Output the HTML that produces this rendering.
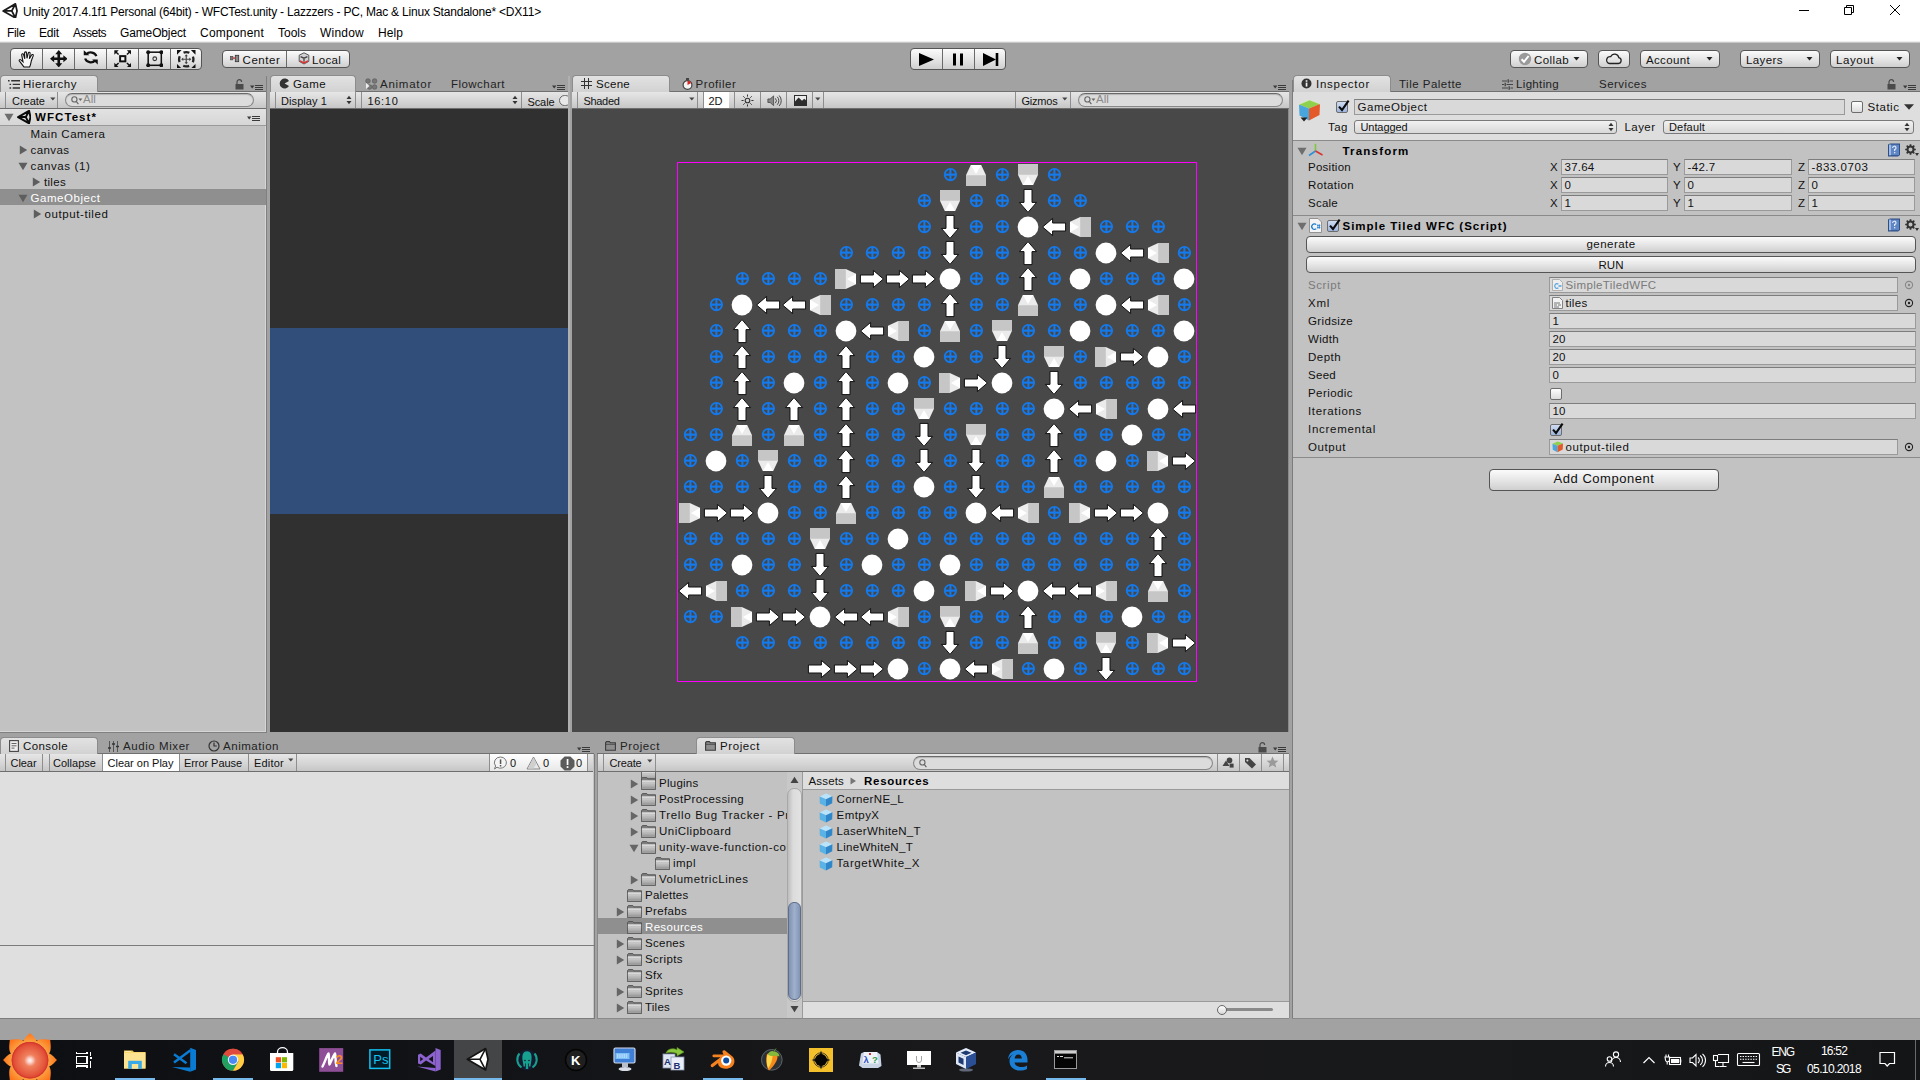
<!DOCTYPE html>
<html><head><meta charset="utf-8"><title>Unity</title>
<style>
html,body{margin:0;padding:0}
body{width:1920px;height:1080px;overflow:hidden;background:#a2a2a2;font-family:"Liberation Sans",sans-serif;position:relative}
div,span.t,svg{position:absolute}
.t{white-space:nowrap}
.tb{background:linear-gradient(#e6e6e6,#d4d4d4 60%,#c6c6c6);border-bottom:1px solid #6e6e6e;box-sizing:border-box}
.tab{background:linear-gradient(#e2e2e2,#d2d2d2);border:1px solid #8c8c8c;border-bottom:none;border-radius:4px 4px 0 0;box-sizing:border-box}
.btn{background:linear-gradient(#fbfbfb,#e4e4e4 55%,#cfcfcf);border:1px solid #555;border-radius:4px;box-sizing:border-box}
.inp{background:#d9d9d9;border:1px solid #9a9a9a;border-top-color:#7d7d7d;box-sizing:border-box}
.pop{background:linear-gradient(#f2f2f2,#d8d8d8);border:1px solid #7a7a7a;border-radius:3px;box-sizing:border-box}
.sep{background:#8e8e8e;width:1px}
</style></head><body>
<div style="left:0px;top:0px;width:1920px;height:43.5px;background:linear-gradient(#fff 41px,#c8c8c8 42.5px,#a2a2a2 43.5px)"></div><svg style="left:2.2px;top:2.7px" width="15.8" height="15.8" viewBox="0 0 16 16"><path d="M1.2 8 L13.6 0.9 L15.2 8 L13.6 15.1Z M9.9 8 H1.6 M9.9 8 L13.5 1.2 M9.9 8 L13.5 14.8" fill="none" stroke="#1a1a1a" stroke-width="1.8" stroke-linejoin="round"/></svg><span class="t" style="left:23px;top:3px;font-size:12px;line-height:18px;color:#000;letter-spacing:-0.207px;">Unity 2017.4.1f1 Personal (64bit) - WFCTest.unity - Lazzzers - PC, Mac &amp; Linux Standalone* &lt;DX11&gt;</span><svg style="left:1790px;top:0" width="130" height="22" viewBox="0 0 130 22"><g stroke="#000" stroke-width="1" fill="none"><path d="M9 10.5 H19"/><path d="M54.5 7.5 H61.5 V14.5 H54.5Z M56.5 7.5 V5.5 H63.5 V12.5 H61.5"/><path d="M100 5 L110 15 M110 5 L100 15"/></g></svg><span class="t" style="left:7px;top:25px;font-size:12px;line-height:16px;color:#000;letter-spacing:-0.336px;">File</span><span class="t" style="left:39px;top:25px;font-size:12px;line-height:16px;color:#000;letter-spacing:-0.172px;">Edit</span><span class="t" style="left:73px;top:25px;font-size:12px;line-height:16px;color:#000;letter-spacing:-0.503px;">Assets</span><span class="t" style="left:120px;top:25px;font-size:12px;line-height:16px;color:#000;letter-spacing:-0.136px;">GameObject</span><span class="t" style="left:200px;top:25px;font-size:12px;line-height:16px;color:#000;letter-spacing:0.217px;">Component</span><span class="t" style="left:278px;top:25px;font-size:12px;line-height:16px;color:#000;letter-spacing:-0.003px;">Tools</span><span class="t" style="left:320px;top:25px;font-size:12px;line-height:16px;color:#000;letter-spacing:0.219px;">Window</span><span class="t" style="left:378px;top:25px;font-size:12px;line-height:16px;color:#000;letter-spacing:0.078px;">Help</span><div class="btn" style="left:10px;top:48px;width:192px;height:22px;"></div><div style="left:42px;top:49px;width:1px;height:20px;background:#6a6a6a"></div><div style="left:74px;top:49px;width:1px;height:20px;background:#6a6a6a"></div><div style="left:106px;top:49px;width:1px;height:20px;background:#6a6a6a"></div><div style="left:138px;top:49px;width:1px;height:20px;background:#6a6a6a"></div><div style="left:170px;top:49px;width:1px;height:20px;background:#6a6a6a"></div><svg style="left:17.65px;top:50.05px" width="17.5" height="17.5" viewBox="0 0 16 16"><path d="M5.6 15.6 C4.2 14 3 12 1.3 10.2 C0.6 9.3 1.6 8.2 2.6 9 L4.6 10.8 L3.4 4.6 C3.2 3.4 4.8 3 5.1 4.2 L6.2 8 L6 2.6 C6 1.4 7.7 1.4 7.8 2.6 L8.2 7.6 L9.4 2.8 C9.700 1.600 11.300 2 11.100 3.200 L10.400 8 L12.400 4.600 C13 3.600 14.400 4.300 13.900 5.400 L12.200 9.800 C11.800 12 11.600 13.800 10.600 15.600Z" fill="#f8f8f8" stroke="#111" stroke-width="1"/></svg><svg style="left:49.65px;top:49.75px" width="17.5" height="17.5" viewBox="0 0 16 16"><path d="M8 0 L11.2 3.8 H9.2 V6.8 H12.2 V4.8 L16 8 L12.2 11.2 V9.2 H9.2 V12.2 H11.2 L8 16 L4.8 12.200 H6.800 V9.200 H3.800 V11.200 L0 8 L3.800 4.800 V6.800 H6.800 V3.800 H4.800Z" fill="#111"/></svg><svg style="left:82.65px;top:49.75px" width="15.5" height="15.5" viewBox="0 0 16 16"><g transform="translate(16 0) scale(-1 1)"><path d="M2.2 6.4 A6 5.2 0 0 1 12.6 4.4" fill="none" stroke="#111" stroke-width="2.3"/><path d="M9.4 5.400 H15.200 V0.200Z" fill="#111"/><path d="M13.800 8.800 A6 5.200 0 0 1 3.400 10.800" fill="none" stroke="#111" stroke-width="2.300"/><path d="M6.600 9.800 H0.800 V15Z" fill="#111"/></g></svg><svg style="left:113.65px;top:49.75px" width="17.5" height="17.5" viewBox="0 0 16 16"><rect x="5.6" y="5.600" width="4.800" height="4.800" fill="#f4f4f4" stroke="#111" stroke-width="1.800"/><path d="M0.300 0.300 H4.300 L0.300 4.300Z M15.700 0.300 V4.300 L11.700 0.300Z M0.300 15.700 V11.700 L4.300 15.700Z M15.700 15.700 H11.700 L15.700 11.700Z" fill="#111"/><path d="M1.500 1.500 L4.200 4.200 M14.500 1.500 L11.800 4.200 M1.500 14.500 L4.200 11.800 M14.500 14.500 L11.800 11.800" stroke="#111" stroke-width="1.300"/></svg><svg style="left:145.65px;top:49.75px" width="17.5" height="17.5" viewBox="0 0 16 16"><rect x="2" y="2" width="12" height="12" fill="none" stroke="#111" stroke-width="1.400"/><circle cx="2" cy="2" r="1.800" fill="#111"/><circle cx="14" cy="2" r="1.800" fill="#111"/><circle cx="2" cy="14" r="1.800" fill="#111"/><circle cx="14" cy="14" r="1.800" fill="#111"/><circle cx="8" cy="8" r="1.700" fill="none" stroke="#333" stroke-width="1"/></svg><svg style="left:177.15px;top:49.55px" width="18.5" height="18.5" viewBox="0 0 16 16"><circle cx="8" cy="8" r="6.200" fill="none" stroke="#222" stroke-width="2" stroke-dasharray="5.200 4.540" stroke-dashoffset="2.600"/><path d="M8 3.600 L9.500 5.400 H8.500 V7.500 H10.600 V6.500 L12.400 8 L10.600 9.500 V8.500 H8.500 V10.600 H9.500 L8 12.400 L6.500 10.600 H7.500 V8.500 H5.400 V9.500 L3.600 8 L5.400 6.500 V7.500 H7.500 V5.400 H6.500Z" fill="#444"/><path d="M0 0 H4 L0 4Z M16 0 V4 L12 0Z M0 16 V12 L4 16Z M16 16 H12 L16 12Z" fill="#111"/></svg><div class="btn" style="left:222px;top:50px;width:128px;height:18px;"></div><div style="left:286px;top:51px;width:1px;height:16px;background:#6a6a6a"></div><svg style="left:229.5px;top:54px" width="11" height="10" viewBox="0 0 11 10"><rect x="0.300" y="2.300" width="2.600" height="3.600" fill="#777" stroke="#444" stroke-width="0.600"/><rect x="5.300" y="1.300" width="3.400" height="6.400" fill="#8a8a8a" stroke="#333" stroke-width="0.800"/><rect x="3" y="3.400" width="2.300" height="1.400" fill="#d33"/></svg><span class="t" style="left:242.5px;top:52.6px;font-size:11.5px;line-height:14px;color:#111;letter-spacing:0.578px;">Center</span><svg style="left:298px;top:52px" width="12" height="13" viewBox="0 0 12 13"><path d="M6 0.800 L10.800 3.200 V9.400 L6 12 L1.200 9.400 V3.200Z" fill="#d2d2d2" stroke="#4a4a4a" stroke-width="0.900"/><path d="M2.600 4.600 L6 6.200 L9.400 4.600 M6 6.200 V9.800" stroke="#444" stroke-width="1.300" fill="none"/><path d="M2 8.800 L6 10.900 L10 8.800" stroke="#e03030" stroke-width="1.300" fill="none"/></svg><span class="t" style="left:312px;top:52.6px;font-size:11.5px;line-height:14px;color:#111;letter-spacing:0.3px;">Local</span><div class="btn" style="left:910px;top:48px;width:96px;height:22px;"></div><div style="left:942px;top:49px;width:1px;height:20px;background:#6a6a6a"></div><div style="left:974px;top:49px;width:1px;height:20px;background:#6a6a6a"></div><svg style="left:910px;top:48px" width="96" height="22" viewBox="0 0 96 22"><path d="M9 5 L24 11.5 L9 18Z" fill="#000"/><path d="M44.5 5.5 V17.5 M51.5 5.5 V17.5" stroke="#000" stroke-width="3"/><path d="M73 5 L86 11.5 L73 18Z" fill="#000"/><path d="M87 5 V18" stroke="#000" stroke-width="2.6"/></svg><div class="btn" style="left:1510px;top:50px;width:78px;height:18px;"></div><svg style="left:1518px;top:52px" width="14" height="14" viewBox="0 0 14 14"><circle cx="7" cy="7" r="6.2" fill="#9a9a9a"/><path d="M3.6 7.2 L6 9.8 L10.6 4" stroke="#fff" stroke-width="2" fill="none"/></svg><span class="t" style="left:1534px;top:52.6px;font-size:11.5px;line-height:14px;color:#111;letter-spacing:0.398px;">Collab</span><svg style="left:1573px;top:56px" width="8" height="6"><path d="M0.5 1 H6.5 L3.5 4.5Z" fill="#222"/></svg><div class="btn" style="left:1598px;top:50px;width:32px;height:18px;"></div><svg style="left:1605px;top:52px" width="18" height="14" viewBox="0 0 18 14"><path d="M4.5 11.5 H13.5 A3 3 0 0 0 13.8 5.6 A4.2 4.2 0 0 0 5.8 4.6 A3.4 3.4 0 0 0 4.5 11.5Z" fill="none" stroke="#222" stroke-width="1.3"/></svg><div class="btn" style="left:1640px;top:50px;width:80px;height:18px;"></div><span class="t" style="left:1646px;top:52.6px;font-size:11.5px;line-height:14px;color:#111;letter-spacing:0.348px;">Account</span><svg style="left:1706px;top:56px" width="8" height="6"><path d="M0.5 1 H6.5 L3.5 4.5Z" fill="#222"/></svg><div class="btn" style="left:1740px;top:50px;width:80px;height:18px;"></div><span class="t" style="left:1746px;top:52.6px;font-size:11.5px;line-height:14px;color:#111;letter-spacing:0.411px;">Layers</span><svg style="left:1806px;top:56px" width="8" height="6"><path d="M0.5 1 H6.5 L3.5 4.5Z" fill="#222"/></svg><div class="btn" style="left:1830px;top:50px;width:80px;height:18px;"></div><span class="t" style="left:1836px;top:52.6px;font-size:11.5px;line-height:14px;color:#111;letter-spacing:0.578px;">Layout</span><svg style="left:1896px;top:56px" width="8" height="6"><path d="M0.5 1 H6.5 L3.5 4.5Z" fill="#222"/></svg><div style="left:0px;top:91px;width:266px;height:641px;background:#c2c2c2"></div><div style="left:0px;top:91px;width:266px;height:1px;background:#707070"></div><div style="left:265px;top:92px;width:1px;height:640px;background:#d6d6d6"></div><div style="left:0px;top:731px;width:266px;height:1px;background:#d6d6d6"></div><div style="left:266px;top:76px;width:1px;height:657px;background:#808080"></div><div style="left:0px;top:732px;width:267px;height:1px;background:#808080"></div><div class="tab" style="left:0px;top:75px;width:98px;height:17px;"></div><svg style="left:8px;top:80px" width="12" height="9" viewBox="0 0 12 9"><path d="M0 0.8 H1.6 M3.2 0.8 H12 M1.5 4.4 H3.1 M4.7 4.4 H12 M1.5 8 H3.1 M4.7 8 H12" stroke="#333" stroke-width="1.4"/></svg><span class="t" style="left:23px;top:77px;font-size:11.5px;line-height:15px;color:#111;letter-spacing:0.531px;">Hierarchy</span><svg style="left:235px;top:79px" width="9" height="11" viewBox="0 0 9 11"><path d="M2 5 V3 A2.3 2.3 0 0 1 6.6 3" fill="none" stroke="#4a4a4a" stroke-width="1.2"/><rect x="0.5" y="5" width="8" height="5.5" fill="#4a4a4a"/></svg><svg style="left:250px;top:84px" width="13" height="8" viewBox="0 0 13 8"><path d="M0 1.500 H4.400 L2.200 4.500Z" fill="#3a3a3a"/><path d="M5 1.500 H13 M5 3.500 H13 M5 5.500 H13" stroke="#3a3a3a" stroke-width="1"/></svg><div class="tb" style="left:0px;top:92px;width:266px;height:17px;"></div><div class="sep" style="left:5px;top:92px;width:1px;height:16px;"></div><div class="sep" style="left:57px;top:92px;width:1px;height:16px;"></div><span class="t" style="left:12px;top:93.8px;font-size:11px;line-height:15px;color:#111;letter-spacing:-0.005px;">Create</span><svg style="left:50px;top:97px" width="6" height="4"><path d="M0.2 0.4 H5.4 L2.8 3.4Z" fill="#444"/></svg><div style="left:65px;top:93px;width:189px;height:14px;background:#dcdcdc;border:1px solid #888;border-top-color:#6a6a6a;border-radius:8px;box-sizing:border-box;box-shadow:inset 0 1px 1px rgba(0,0,0,.18)"></div><svg style="left:71px;top:96px" width="12" height="9" viewBox="0 0 12 9"><circle cx="3.4" cy="3.4" r="2.6" fill="none" stroke="#666" stroke-width="1.1"/><path d="M5.2 5.4 L7.4 8.2" stroke="#666" stroke-width="1.2"/><path d="M7.4 2.6 H11.4 L9.4 5Z" fill="#666"/></svg><span class="t" style="left:83px;top:92px;font-size:11.5px;line-height:15px;color:#8a8a8a;">All</span><div style="left:0px;top:109px;width:266px;height:17px;background:linear-gradient(#e2e2e2,#d6d6d6);border-bottom:1px solid #9a9a9a;box-sizing:border-box"></div><svg style="left:4px;top:113px" width="10" height="9"><path d="M0.5 0.8 H9.5 L5 8.2Z" fill="#6e6e6e"/></svg><svg style="left:17px;top:110px" width="14.2" height="14.2" viewBox="0 0 16 16"><path d="M1.2 8 L13.6 0.9 L15.2 8 L13.6 15.1Z M9.9 8 H1.6 M9.9 8 L13.5 1.2 M9.9 8 L13.5 14.8" fill="none" stroke="#0a0a0a" stroke-width="2.2" stroke-linejoin="round"/></svg><span class="t" style="left:35px;top:110px;font-size:11.5px;line-height:15px;color:#000;font-weight:bold;letter-spacing:1.068px;">WFCTest*</span><svg style="left:247px;top:115px" width="13" height="8" viewBox="0 0 13 8"><path d="M0 1.500 H4.400 L2.200 4.500Z" fill="#3a3a3a"/><path d="M5 1.500 H13 M5 3.500 H13 M5 5.500 H13" stroke="#3a3a3a" stroke-width="1"/></svg><span class="t" style="left:30.5px;top:126.7px;font-size:11.5px;line-height:15px;color:#111;letter-spacing:0.543px;">Main Camera</span><svg style="left:18.5px;top:145px" width="9" height="10"><path d="M0.8 0.5 V9.5 L8.2 5Z" fill="#5e5e5e"/></svg><span class="t" style="left:30.5px;top:142.7px;font-size:11.5px;line-height:15px;color:#111;letter-spacing:0.427px;">canvas</span><svg style="left:17.5px;top:161.5px" width="10" height="9"><path d="M0.5 0.8 H9.5 L5 8.2Z" fill="#5e5e5e"/></svg><span class="t" style="left:30.5px;top:158.7px;font-size:11.5px;line-height:15px;color:#111;letter-spacing:0.631px;">canvas (1)</span><svg style="left:32px;top:177px" width="9" height="10"><path d="M0.8 0.5 V9.5 L8.2 5Z" fill="#5e5e5e"/></svg><span class="t" style="left:44px;top:174.7px;font-size:11.5px;line-height:15px;color:#111;letter-spacing:0.309px;">tiles</span><div style="left:0px;top:188.5px;width:266px;height:16px;background:#8f8f8f"></div><svg style="left:17.5px;top:193.5px" width="10" height="9"><path d="M0.5 0.8 H9.5 L5 8.2Z" fill="#5e5e5e"/></svg><span class="t" style="left:30.5px;top:190.7px;font-size:11.5px;line-height:15px;color:#fff;letter-spacing:0.544px;">GameObject</span><svg style="left:32.5px;top:209px" width="9" height="10"><path d="M0.8 0.5 V9.5 L8.2 5Z" fill="#5e5e5e"/></svg><span class="t" style="left:44.5px;top:206.7px;font-size:11.5px;line-height:15px;color:#111;letter-spacing:0.591px;">output-tiled</span><div style="left:270px;top:91px;width:298px;height:641px;background:#303030"></div><div style="left:270px;top:91px;width:298px;height:1px;background:#707070"></div><div style="left:270px;top:328px;width:298px;height:186px;background:#314d79"></div><div style="left:568px;top:76px;width:2px;height:656px;background:#b0b0b0"></div><div class="tab" style="left:270px;top:75px;width:86px;height:17px;"></div><svg style="left:279px;top:78px" width="11" height="11" viewBox="0 0 11 11"><path d="M10 3 A5 5 0 1 0 10 8 L5.6 5.5Z" fill="#333"/></svg><span class="t" style="left:293px;top:77px;font-size:11.5px;line-height:15px;color:#111;letter-spacing:0.418px;">Game</span><svg style="left:365px;top:78px" width="13" height="12" viewBox="0 0 13 12"><g fill="#777" stroke="#555" stroke-width="0.6"><circle cx="3" cy="3" r="2.3"/><circle cx="9.6" cy="3" r="2.3"/><circle cx="9.6" cy="9" r="2.3"/><circle cx="4.6" cy="9" r="2.3"/></g><path d="M1 5 V11 L4.5 8Z" fill="#eee"/></svg><span class="t" style="left:380px;top:77px;font-size:11.5px;line-height:15px;color:#222;letter-spacing:0.746px;">Animator</span><span class="t" style="left:451px;top:77px;font-size:11.5px;line-height:15px;color:#222;letter-spacing:0.46px;">Flowchart</span><svg style="left:552px;top:84px" width="13" height="8" viewBox="0 0 13 8"><path d="M0 1.500 H4.400 L2.200 4.500Z" fill="#3a3a3a"/><path d="M5 1.500 H13 M5 3.500 H13 M5 5.500 H13" stroke="#3a3a3a" stroke-width="1"/></svg><div class="tb" style="left:270px;top:92px;width:298px;height:17px;"></div><div class="sep" style="left:275px;top:92px;width:1px;height:16px;"></div><div class="sep" style="left:355px;top:92px;width:1px;height:16px;"></div><div class="sep" style="left:361px;top:92px;width:1px;height:16px;"></div><div class="sep" style="left:521px;top:92px;width:1px;height:16px;"></div><span class="t" style="left:281px;top:93.8px;font-size:11px;line-height:15px;color:#111;letter-spacing:0.083px;">Display 1</span><svg style="left:346px;top:95px" width="6" height="10"><path d="M0.5 4 H5.5 L3 0.8Z M0.5 6 H5.5 L3 9.2Z" fill="#333"/></svg><span class="t" style="left:367.5px;top:93.8px;font-size:11px;line-height:15px;color:#111;letter-spacing:0.694px;">16:10</span><svg style="left:512px;top:95px" width="6" height="10"><path d="M0.5 4 H5.5 L3 0.8Z M0.5 6 H5.5 L3 9.2Z" fill="#333"/></svg><span class="t" style="left:527.5px;top:94.5px;font-size:11px;line-height:15px;color:#111;letter-spacing:-0.106px;">Scale</span><div style="left:559px;top:95px;width:12px;height:11px;border:1px solid #666;border-radius:6px;background:#e8e8e8;box-sizing:border-box;clip-path:inset(0 3px 0 0)"></div><div style="left:572px;top:91px;width:716px;height:641px;background:#484848"></div><div style="left:1288px;top:92px;width:1px;height:640px;background:#8a8a8a"></div><div style="left:572px;top:91px;width:717px;height:1px;background:#707070"></div><div class="tab" style="left:572px;top:75px;width:98px;height:17px;"></div><svg style="left:581px;top:78px" width="11" height="11" viewBox="0 0 11 11"><path d="M3.5 0 V11 M7.5 0 V11 M0 3.5 H11 M0 7.5 H11" stroke="#333" stroke-width="1"/></svg><span class="t" style="left:596px;top:77px;font-size:11.5px;line-height:15px;color:#111;letter-spacing:0.278px;">Scene</span><svg style="left:682px;top:78px" width="11" height="12" viewBox="0 0 11 12"><rect x="4" y="0" width="3" height="2" fill="#444"/><circle cx="5.5" cy="7" r="4.4" fill="#f4f4f4" stroke="#444" stroke-width="1.2"/><path d="M5.5 7 V2.8 A4.2 4.2 0 0 1 9.2 5Z" fill="#d22"/></svg><span class="t" style="left:695.5px;top:77px;font-size:11.5px;line-height:15px;color:#222;letter-spacing:0.57px;">Profiler</span><svg style="left:1273px;top:84px" width="13" height="8" viewBox="0 0 13 8"><path d="M0 1.500 H4.400 L2.200 4.500Z" fill="#3a3a3a"/><path d="M5 1.500 H13 M5 3.500 H13 M5 5.500 H13" stroke="#3a3a3a" stroke-width="1"/></svg><div class="tb" style="left:572px;top:92px;width:717px;height:17px;"></div><div class="sep" style="left:577px;top:92px;width:1px;height:16px;"></div><div class="sep" style="left:697px;top:92px;width:1px;height:16px;"></div><div class="sep" style="left:703px;top:92px;width:1px;height:16px;"></div><div class="sep" style="left:734px;top:92px;width:1px;height:16px;"></div><div class="sep" style="left:760px;top:92px;width:1px;height:16px;"></div><div class="sep" style="left:786px;top:92px;width:1px;height:16px;"></div><div class="sep" style="left:812px;top:92px;width:1px;height:16px;"></div><div class="sep" style="left:823px;top:92px;width:1px;height:16px;"></div><div class="sep" style="left:1015px;top:92px;width:1px;height:16px;"></div><div class="sep" style="left:1070px;top:92px;width:1px;height:16px;"></div><span class="t" style="left:583.5px;top:93.8px;font-size:11px;line-height:15px;color:#111;letter-spacing:-0.323px;">Shaded</span><svg style="left:689px;top:97px" width="6" height="4"><path d="M0.2 0.4 H5.4 L2.8 3.4Z" fill="#444"/></svg><div style="left:704px;top:92px;width:25px;height:16px;background:#fff"></div><span class="t" style="left:708.5px;top:93.8px;font-size:11px;line-height:15px;color:#111;letter-spacing:-0.031px;">2D</span><svg style="left:740px;top:93px" width="15" height="15" viewBox="0 0 15 15"><circle cx="7.5" cy="7.5" r="2.3" fill="none" stroke="#333" stroke-width="1.1"/><path d="M7.5 1.5 V3.6 M7.5 11.4 V13.5 M1.5 7.5 H3.6 M11.4 7.5 H13.5 M3.3 3.3 L4.7 4.7 M10.3 10.3 L11.7 11.7 M3.3 11.7 L4.7 10.3 M10.3 4.7 L11.7 3.3" stroke="#333" stroke-width="1"/></svg><svg style="left:766.5px;top:94px" width="15" height="13.500" viewBox="0 0 17 15"><path d="M1 5.5 H3.5 L7.5 2 V13 L3.5 9.5 H1Z" fill="#888" stroke="#444" stroke-width="0.9"/><path d="M9.5 4.8 A4 4 0 0 1 9.5 10.2 M11.6 3 A6.5 6.5 0 0 1 11.6 12 M13.8 1.6 A8.6 8.6 0 0 1 13.8 13.4" fill="none" stroke="#444" stroke-width="1.1"/></svg><svg style="left:794px;top:95px" width="13" height="11" viewBox="0 0 13 11"><rect x="0" y="0" width="13" height="11" fill="#2e2e2e"/><path d="M1 1 H12 V5.200 L10.200 3.800 L8 5.800 L4.600 2.600 L1 6.600Z" fill="#ececec"/></svg><svg style="left:815px;top:97px" width="6" height="4"><path d="M0.2 0.4 H5.4 L2.8 3.4Z" fill="#444"/></svg><span class="t" style="left:1021.5px;top:93.8px;font-size:11px;line-height:15px;color:#111;letter-spacing:-0.214px;">Gizmos</span><svg style="left:1062px;top:97px" width="6" height="4"><path d="M0.2 0.4 H5.4 L2.8 3.4Z" fill="#444"/></svg><div style="left:1078px;top:93px;width:205px;height:14px;background:#dcdcdc;border:1px solid #888;border-top-color:#6a6a6a;border-radius:8px;box-sizing:border-box;box-shadow:inset 0 1px 1px rgba(0,0,0,.18)"></div><svg style="left:1084px;top:96px" width="12" height="9" viewBox="0 0 12 9"><circle cx="3.4" cy="3.4" r="2.6" fill="none" stroke="#666" stroke-width="1.1"/><path d="M5.2 5.4 L7.4 8.2" stroke="#666" stroke-width="1.2"/><path d="M7.4 2.6 H11.4 L9.4 5Z" fill="#666"/></svg><span class="t" style="left:1096px;top:92px;font-size:11.5px;line-height:15px;color:#8a8a8a;">All</span><svg style="left:572px;top:109px" width="716" height="623" viewBox="572 109 716 623"><style>.ec{fill:#494540;stroke:#1479ea;stroke-width:1.9}.ep{stroke:#1479ea;stroke-width:2.1;fill:none}.ar{fill:#fff;stroke:#101010;stroke-width:1}.l1{fill:#c6c6c6}.l2{fill:#ebebeb}.l3{fill:#fff}</style><rect x="677.5" y="162.5" width="519" height="519" fill="none" stroke="#f0f" stroke-width="1"/><circle cx="950.4" cy="174.6" r="5.7" class="ec"/><path d="M944.7 174.6H956.1M950.4 168.9V180.3" class="ep"/><g transform="translate(976 175) rotate(270)"><rect x="-11" y="-10" width="11" height="20" class="l1"/><path d="M-.2 -10 10 -5.2V5.2L-.2 10Z" class="l2"/><path d="M10 -5.2V5.2L1 0Z" class="l3"/></g><circle cx="1002.4" cy="174.6" r="5.7" class="ec"/><path d="M996.7 174.6H1008.1M1002.4 168.9V180.3" class="ep"/><g transform="translate(1028 175) rotate(90)"><rect x="-11" y="-10" width="11" height="20" class="l1"/><path d="M-.2 -10 10 -5.2V5.2L-.2 10Z" class="l2"/><path d="M10 -5.2V5.2L1 0Z" class="l3"/></g><circle cx="1054.4" cy="174.6" r="5.7" class="ec"/><path d="M1048.7 174.6H1060.1M1054.4 168.9V180.3" class="ep"/><circle cx="924.4" cy="200.6" r="5.7" class="ec"/><path d="M918.7 200.6H930.1M924.4 194.9V206.3" class="ep"/><g transform="translate(950 201) rotate(90)"><rect x="-11" y="-10" width="11" height="20" class="l1"/><path d="M-.2 -10 10 -5.2V5.2L-.2 10Z" class="l2"/><path d="M10 -5.2V5.2L1 0Z" class="l3"/></g><circle cx="976.4" cy="200.6" r="5.7" class="ec"/><path d="M970.7 200.6H982.1M976.4 194.9V206.3" class="ep"/><circle cx="1002.4" cy="200.6" r="5.7" class="ec"/><path d="M996.7 200.6H1008.1M1002.4 194.9V206.3" class="ep"/><path transform="translate(1028 201) rotate(90)" class="ar" d="M-11.6 -4H1.4V-8.6L11.4 0 1.4 8.6V4H-11.6Z"/><circle cx="1054.4" cy="200.6" r="5.7" class="ec"/><path d="M1048.7 200.6H1060.1M1054.4 194.9V206.3" class="ep"/><circle cx="1080.4" cy="200.6" r="5.7" class="ec"/><path d="M1074.7 200.6H1086.1M1080.4 194.9V206.3" class="ep"/><circle cx="924.4" cy="226.6" r="5.7" class="ec"/><path d="M918.7 226.6H930.1M924.4 220.9V232.3" class="ep"/><path transform="translate(950 227) rotate(90)" class="ar" d="M-11.6 -4H1.4V-8.6L11.4 0 1.4 8.6V4H-11.6Z"/><circle cx="976.4" cy="226.6" r="5.7" class="ec"/><path d="M970.7 226.6H982.1M976.4 220.9V232.3" class="ep"/><circle cx="1002.4" cy="226.6" r="5.7" class="ec"/><path d="M996.7 226.6H1008.1M1002.4 220.9V232.3" class="ep"/><circle cx="1028" cy="227" r="10.4" fill="#fff"/><path transform="translate(1054 227) rotate(180)" class="ar" d="M-11.6 -4H1.4V-8.6L11.4 0 1.4 8.6V4H-11.6Z"/><g transform="translate(1080 227) rotate(180)"><rect x="-11" y="-10" width="11" height="20" class="l1"/><path d="M-.2 -10 10 -5.2V5.2L-.2 10Z" class="l2"/><path d="M10 -5.2V5.2L1 0Z" class="l3"/></g><circle cx="1106.4" cy="226.6" r="5.7" class="ec"/><path d="M1100.7 226.6H1112.1M1106.4 220.9V232.3" class="ep"/><circle cx="1132.4" cy="226.6" r="5.7" class="ec"/><path d="M1126.7 226.6H1138.1M1132.4 220.9V232.3" class="ep"/><circle cx="1158.4" cy="226.6" r="5.7" class="ec"/><path d="M1152.7 226.6H1164.1M1158.4 220.9V232.3" class="ep"/><circle cx="846.4" cy="252.6" r="5.7" class="ec"/><path d="M840.7 252.6H852.1M846.4 246.9V258.3" class="ep"/><circle cx="872.4" cy="252.6" r="5.7" class="ec"/><path d="M866.7 252.6H878.1M872.4 246.9V258.3" class="ep"/><circle cx="898.4" cy="252.6" r="5.7" class="ec"/><path d="M892.7 252.6H904.1M898.4 246.9V258.3" class="ep"/><circle cx="924.4" cy="252.6" r="5.7" class="ec"/><path d="M918.7 252.6H930.1M924.4 246.9V258.3" class="ep"/><path transform="translate(950 253) rotate(90)" class="ar" d="M-11.6 -4H1.4V-8.6L11.4 0 1.4 8.6V4H-11.6Z"/><circle cx="976.4" cy="252.6" r="5.7" class="ec"/><path d="M970.7 252.6H982.1M976.4 246.9V258.3" class="ep"/><circle cx="1002.4" cy="252.6" r="5.7" class="ec"/><path d="M996.7 252.6H1008.1M1002.4 246.9V258.3" class="ep"/><path transform="translate(1028 253) rotate(270)" class="ar" d="M-11.6 -4H1.4V-8.6L11.4 0 1.4 8.6V4H-11.6Z"/><circle cx="1054.4" cy="252.6" r="5.7" class="ec"/><path d="M1048.7 252.6H1060.1M1054.4 246.9V258.3" class="ep"/><circle cx="1080.4" cy="252.6" r="5.7" class="ec"/><path d="M1074.7 252.6H1086.1M1080.4 246.9V258.3" class="ep"/><circle cx="1106" cy="253" r="10.4" fill="#fff"/><path transform="translate(1132 253) rotate(180)" class="ar" d="M-11.6 -4H1.4V-8.6L11.4 0 1.4 8.6V4H-11.6Z"/><g transform="translate(1158 253) rotate(180)"><rect x="-11" y="-10" width="11" height="20" class="l1"/><path d="M-.2 -10 10 -5.2V5.2L-.2 10Z" class="l2"/><path d="M10 -5.2V5.2L1 0Z" class="l3"/></g><circle cx="1184.4" cy="252.6" r="5.7" class="ec"/><path d="M1178.7 252.6H1190.1M1184.4 246.9V258.3" class="ep"/><circle cx="742.4" cy="278.6" r="5.7" class="ec"/><path d="M736.7 278.6H748.1M742.4 272.9V284.3" class="ep"/><circle cx="768.4" cy="278.6" r="5.7" class="ec"/><path d="M762.7 278.6H774.1M768.4 272.9V284.3" class="ep"/><circle cx="794.4" cy="278.6" r="5.7" class="ec"/><path d="M788.7 278.6H800.1M794.4 272.9V284.3" class="ep"/><circle cx="820.4" cy="278.6" r="5.7" class="ec"/><path d="M814.7 278.6H826.1M820.4 272.9V284.3" class="ep"/><g transform="translate(846 279)"><rect x="-11" y="-10" width="11" height="20" class="l1"/><path d="M-.2 -10 10 -5.2V5.2L-.2 10Z" class="l2"/><path d="M10 -5.2V5.2L1 0Z" class="l3"/></g><path transform="translate(872 279)" class="ar" d="M-11.6 -4H1.4V-8.6L11.4 0 1.4 8.6V4H-11.6Z"/><path transform="translate(898 279)" class="ar" d="M-11.6 -4H1.4V-8.6L11.4 0 1.4 8.6V4H-11.6Z"/><path transform="translate(924 279)" class="ar" d="M-11.6 -4H1.4V-8.6L11.4 0 1.4 8.6V4H-11.6Z"/><circle cx="950" cy="279" r="10.4" fill="#fff"/><circle cx="976.4" cy="278.6" r="5.7" class="ec"/><path d="M970.7 278.6H982.1M976.4 272.9V284.3" class="ep"/><circle cx="1002.4" cy="278.6" r="5.7" class="ec"/><path d="M996.7 278.6H1008.1M1002.4 272.9V284.3" class="ep"/><path transform="translate(1028 279) rotate(270)" class="ar" d="M-11.6 -4H1.4V-8.6L11.4 0 1.4 8.6V4H-11.6Z"/><circle cx="1054.4" cy="278.6" r="5.7" class="ec"/><path d="M1048.7 278.6H1060.1M1054.4 272.9V284.3" class="ep"/><circle cx="1080" cy="279" r="10.4" fill="#fff"/><circle cx="1106.4" cy="278.6" r="5.7" class="ec"/><path d="M1100.7 278.6H1112.1M1106.4 272.9V284.3" class="ep"/><circle cx="1132.4" cy="278.6" r="5.7" class="ec"/><path d="M1126.7 278.6H1138.1M1132.4 272.9V284.3" class="ep"/><circle cx="1158.4" cy="278.6" r="5.7" class="ec"/><path d="M1152.7 278.6H1164.1M1158.4 272.9V284.3" class="ep"/><circle cx="1184" cy="279" r="10.4" fill="#fff"/><circle cx="716.4" cy="304.6" r="5.7" class="ec"/><path d="M710.7 304.6H722.1M716.4 298.9V310.3" class="ep"/><circle cx="742" cy="305" r="10.4" fill="#fff"/><path transform="translate(768 305) rotate(180)" class="ar" d="M-11.6 -4H1.4V-8.6L11.4 0 1.4 8.6V4H-11.6Z"/><path transform="translate(794 305) rotate(180)" class="ar" d="M-11.6 -4H1.4V-8.6L11.4 0 1.4 8.6V4H-11.6Z"/><g transform="translate(820 305) rotate(180)"><rect x="-11" y="-10" width="11" height="20" class="l1"/><path d="M-.2 -10 10 -5.2V5.2L-.2 10Z" class="l2"/><path d="M10 -5.2V5.2L1 0Z" class="l3"/></g><circle cx="846.4" cy="304.6" r="5.7" class="ec"/><path d="M840.7 304.6H852.1M846.4 298.9V310.3" class="ep"/><circle cx="872.4" cy="304.6" r="5.7" class="ec"/><path d="M866.7 304.6H878.1M872.4 298.9V310.3" class="ep"/><circle cx="898.4" cy="304.6" r="5.7" class="ec"/><path d="M892.7 304.6H904.1M898.4 298.9V310.3" class="ep"/><circle cx="924.4" cy="304.6" r="5.7" class="ec"/><path d="M918.7 304.6H930.1M924.4 298.9V310.3" class="ep"/><path transform="translate(950 305) rotate(270)" class="ar" d="M-11.6 -4H1.4V-8.6L11.4 0 1.4 8.6V4H-11.6Z"/><circle cx="976.4" cy="304.6" r="5.7" class="ec"/><path d="M970.7 304.6H982.1M976.4 298.9V310.3" class="ep"/><circle cx="1002.4" cy="304.6" r="5.7" class="ec"/><path d="M996.7 304.6H1008.1M1002.4 298.9V310.3" class="ep"/><g transform="translate(1028 305) rotate(270)"><rect x="-11" y="-10" width="11" height="20" class="l1"/><path d="M-.2 -10 10 -5.2V5.2L-.2 10Z" class="l2"/><path d="M10 -5.2V5.2L1 0Z" class="l3"/></g><circle cx="1054.4" cy="304.6" r="5.7" class="ec"/><path d="M1048.7 304.6H1060.1M1054.4 298.9V310.3" class="ep"/><circle cx="1080.4" cy="304.6" r="5.7" class="ec"/><path d="M1074.7 304.6H1086.1M1080.4 298.9V310.3" class="ep"/><circle cx="1106" cy="305" r="10.4" fill="#fff"/><path transform="translate(1132 305) rotate(180)" class="ar" d="M-11.6 -4H1.4V-8.6L11.4 0 1.4 8.6V4H-11.6Z"/><g transform="translate(1158 305) rotate(180)"><rect x="-11" y="-10" width="11" height="20" class="l1"/><path d="M-.2 -10 10 -5.2V5.2L-.2 10Z" class="l2"/><path d="M10 -5.2V5.2L1 0Z" class="l3"/></g><circle cx="1184.4" cy="304.6" r="5.7" class="ec"/><path d="M1178.7 304.6H1190.1M1184.4 298.9V310.3" class="ep"/><circle cx="716.4" cy="330.6" r="5.7" class="ec"/><path d="M710.7 330.6H722.1M716.4 324.9V336.3" class="ep"/><path transform="translate(742 331) rotate(270)" class="ar" d="M-11.6 -4H1.4V-8.6L11.4 0 1.4 8.6V4H-11.6Z"/><circle cx="768.4" cy="330.6" r="5.7" class="ec"/><path d="M762.7 330.6H774.1M768.4 324.9V336.3" class="ep"/><circle cx="794.4" cy="330.6" r="5.7" class="ec"/><path d="M788.7 330.6H800.1M794.4 324.9V336.3" class="ep"/><circle cx="820.4" cy="330.6" r="5.7" class="ec"/><path d="M814.7 330.6H826.1M820.4 324.9V336.3" class="ep"/><circle cx="846" cy="331" r="10.4" fill="#fff"/><path transform="translate(872 331) rotate(180)" class="ar" d="M-11.6 -4H1.4V-8.6L11.4 0 1.4 8.6V4H-11.6Z"/><g transform="translate(898 331) rotate(180)"><rect x="-11" y="-10" width="11" height="20" class="l1"/><path d="M-.2 -10 10 -5.2V5.2L-.2 10Z" class="l2"/><path d="M10 -5.2V5.2L1 0Z" class="l3"/></g><circle cx="924.4" cy="330.6" r="5.7" class="ec"/><path d="M918.7 330.6H930.1M924.4 324.9V336.3" class="ep"/><g transform="translate(950 331) rotate(270)"><rect x="-11" y="-10" width="11" height="20" class="l1"/><path d="M-.2 -10 10 -5.2V5.2L-.2 10Z" class="l2"/><path d="M10 -5.2V5.2L1 0Z" class="l3"/></g><circle cx="976.4" cy="330.6" r="5.7" class="ec"/><path d="M970.7 330.6H982.1M976.4 324.9V336.3" class="ep"/><g transform="translate(1002 331) rotate(90)"><rect x="-11" y="-10" width="11" height="20" class="l1"/><path d="M-.2 -10 10 -5.2V5.2L-.2 10Z" class="l2"/><path d="M10 -5.2V5.2L1 0Z" class="l3"/></g><circle cx="1028.4" cy="330.6" r="5.7" class="ec"/><path d="M1022.7 330.6H1034.1M1028.4 324.9V336.3" class="ep"/><circle cx="1054.4" cy="330.6" r="5.7" class="ec"/><path d="M1048.7 330.6H1060.1M1054.4 324.9V336.3" class="ep"/><circle cx="1080" cy="331" r="10.4" fill="#fff"/><circle cx="1106.4" cy="330.6" r="5.7" class="ec"/><path d="M1100.7 330.6H1112.1M1106.4 324.9V336.3" class="ep"/><circle cx="1132.4" cy="330.6" r="5.7" class="ec"/><path d="M1126.7 330.6H1138.1M1132.4 324.9V336.3" class="ep"/><circle cx="1158.4" cy="330.6" r="5.7" class="ec"/><path d="M1152.7 330.6H1164.1M1158.4 324.9V336.3" class="ep"/><circle cx="1184" cy="331" r="10.4" fill="#fff"/><circle cx="716.4" cy="356.6" r="5.7" class="ec"/><path d="M710.7 356.6H722.1M716.4 350.9V362.3" class="ep"/><path transform="translate(742 357) rotate(270)" class="ar" d="M-11.6 -4H1.4V-8.6L11.4 0 1.4 8.6V4H-11.6Z"/><circle cx="768.4" cy="356.6" r="5.7" class="ec"/><path d="M762.7 356.6H774.1M768.4 350.9V362.3" class="ep"/><circle cx="794.4" cy="356.6" r="5.7" class="ec"/><path d="M788.7 356.6H800.1M794.4 350.9V362.3" class="ep"/><circle cx="820.4" cy="356.6" r="5.7" class="ec"/><path d="M814.7 356.6H826.1M820.4 350.9V362.3" class="ep"/><path transform="translate(846 357) rotate(270)" class="ar" d="M-11.6 -4H1.4V-8.6L11.4 0 1.4 8.6V4H-11.6Z"/><circle cx="872.4" cy="356.6" r="5.7" class="ec"/><path d="M866.7 356.6H878.1M872.4 350.9V362.3" class="ep"/><circle cx="898.4" cy="356.6" r="5.7" class="ec"/><path d="M892.7 356.6H904.1M898.4 350.9V362.3" class="ep"/><circle cx="924" cy="357" r="10.4" fill="#fff"/><circle cx="950.4" cy="356.6" r="5.7" class="ec"/><path d="M944.7 356.6H956.1M950.4 350.9V362.3" class="ep"/><circle cx="976.4" cy="356.6" r="5.7" class="ec"/><path d="M970.7 356.6H982.1M976.4 350.9V362.3" class="ep"/><path transform="translate(1002 357) rotate(90)" class="ar" d="M-11.6 -4H1.4V-8.6L11.4 0 1.4 8.6V4H-11.6Z"/><circle cx="1028.4" cy="356.6" r="5.7" class="ec"/><path d="M1022.7 356.6H1034.1M1028.4 350.9V362.3" class="ep"/><g transform="translate(1054 357) rotate(90)"><rect x="-11" y="-10" width="11" height="20" class="l1"/><path d="M-.2 -10 10 -5.2V5.2L-.2 10Z" class="l2"/><path d="M10 -5.2V5.2L1 0Z" class="l3"/></g><circle cx="1080.4" cy="356.6" r="5.7" class="ec"/><path d="M1074.7 356.6H1086.1M1080.4 350.9V362.3" class="ep"/><g transform="translate(1106 357)"><rect x="-11" y="-10" width="11" height="20" class="l1"/><path d="M-.2 -10 10 -5.2V5.2L-.2 10Z" class="l2"/><path d="M10 -5.2V5.2L1 0Z" class="l3"/></g><path transform="translate(1132 357)" class="ar" d="M-11.6 -4H1.4V-8.6L11.4 0 1.4 8.6V4H-11.6Z"/><circle cx="1158" cy="357" r="10.4" fill="#fff"/><circle cx="1184.4" cy="356.6" r="5.7" class="ec"/><path d="M1178.7 356.6H1190.1M1184.4 350.9V362.3" class="ep"/><circle cx="716.4" cy="382.6" r="5.7" class="ec"/><path d="M710.7 382.6H722.1M716.4 376.9V388.3" class="ep"/><path transform="translate(742 383) rotate(270)" class="ar" d="M-11.6 -4H1.4V-8.6L11.4 0 1.4 8.6V4H-11.6Z"/><circle cx="768.4" cy="382.6" r="5.7" class="ec"/><path d="M762.7 382.6H774.1M768.4 376.9V388.3" class="ep"/><circle cx="794" cy="383" r="10.4" fill="#fff"/><circle cx="820.4" cy="382.6" r="5.7" class="ec"/><path d="M814.7 382.6H826.1M820.4 376.9V388.3" class="ep"/><path transform="translate(846 383) rotate(270)" class="ar" d="M-11.6 -4H1.4V-8.6L11.4 0 1.4 8.6V4H-11.6Z"/><circle cx="872.4" cy="382.6" r="5.7" class="ec"/><path d="M866.7 382.6H878.1M872.4 376.9V388.3" class="ep"/><circle cx="898" cy="383" r="10.4" fill="#fff"/><circle cx="924.4" cy="382.6" r="5.7" class="ec"/><path d="M918.7 382.6H930.1M924.4 376.9V388.3" class="ep"/><g transform="translate(950 383)"><rect x="-11" y="-10" width="11" height="20" class="l1"/><path d="M-.2 -10 10 -5.2V5.2L-.2 10Z" class="l2"/><path d="M10 -5.2V5.2L1 0Z" class="l3"/></g><path transform="translate(976 383)" class="ar" d="M-11.6 -4H1.4V-8.6L11.4 0 1.4 8.6V4H-11.6Z"/><circle cx="1002" cy="383" r="10.4" fill="#fff"/><circle cx="1028.4" cy="382.6" r="5.7" class="ec"/><path d="M1022.7 382.6H1034.1M1028.4 376.9V388.3" class="ep"/><path transform="translate(1054 383) rotate(90)" class="ar" d="M-11.6 -4H1.4V-8.6L11.4 0 1.4 8.6V4H-11.6Z"/><circle cx="1080.4" cy="382.6" r="5.7" class="ec"/><path d="M1074.7 382.6H1086.1M1080.4 376.9V388.3" class="ep"/><circle cx="1106.4" cy="382.6" r="5.7" class="ec"/><path d="M1100.7 382.6H1112.1M1106.4 376.9V388.3" class="ep"/><circle cx="1132.4" cy="382.6" r="5.7" class="ec"/><path d="M1126.7 382.6H1138.1M1132.4 376.9V388.3" class="ep"/><circle cx="1158.4" cy="382.6" r="5.7" class="ec"/><path d="M1152.7 382.6H1164.1M1158.4 376.9V388.3" class="ep"/><circle cx="1184.4" cy="382.6" r="5.7" class="ec"/><path d="M1178.7 382.6H1190.1M1184.4 376.9V388.3" class="ep"/><circle cx="716.4" cy="408.6" r="5.7" class="ec"/><path d="M710.7 408.6H722.1M716.4 402.9V414.3" class="ep"/><path transform="translate(742 409) rotate(270)" class="ar" d="M-11.6 -4H1.4V-8.6L11.4 0 1.4 8.6V4H-11.6Z"/><circle cx="768.4" cy="408.6" r="5.7" class="ec"/><path d="M762.7 408.6H774.1M768.4 402.9V414.3" class="ep"/><path transform="translate(794 409) rotate(270)" class="ar" d="M-11.6 -4H1.4V-8.6L11.4 0 1.4 8.6V4H-11.6Z"/><circle cx="820.4" cy="408.6" r="5.7" class="ec"/><path d="M814.7 408.6H826.1M820.4 402.9V414.3" class="ep"/><path transform="translate(846 409) rotate(270)" class="ar" d="M-11.6 -4H1.4V-8.6L11.4 0 1.4 8.6V4H-11.6Z"/><circle cx="872.4" cy="408.6" r="5.7" class="ec"/><path d="M866.7 408.6H878.1M872.4 402.9V414.3" class="ep"/><circle cx="898.4" cy="408.6" r="5.7" class="ec"/><path d="M892.7 408.6H904.1M898.4 402.9V414.3" class="ep"/><g transform="translate(924 409) rotate(90)"><rect x="-11" y="-10" width="11" height="20" class="l1"/><path d="M-.2 -10 10 -5.2V5.2L-.2 10Z" class="l2"/><path d="M10 -5.2V5.2L1 0Z" class="l3"/></g><circle cx="950.4" cy="408.6" r="5.7" class="ec"/><path d="M944.7 408.6H956.1M950.4 402.9V414.3" class="ep"/><circle cx="976.4" cy="408.6" r="5.7" class="ec"/><path d="M970.7 408.6H982.1M976.4 402.9V414.3" class="ep"/><circle cx="1002.4" cy="408.6" r="5.7" class="ec"/><path d="M996.7 408.6H1008.1M1002.4 402.9V414.3" class="ep"/><circle cx="1028.4" cy="408.6" r="5.7" class="ec"/><path d="M1022.7 408.6H1034.1M1028.4 402.9V414.3" class="ep"/><circle cx="1054" cy="409" r="10.4" fill="#fff"/><path transform="translate(1080 409) rotate(180)" class="ar" d="M-11.6 -4H1.4V-8.6L11.4 0 1.4 8.6V4H-11.6Z"/><g transform="translate(1106 409) rotate(180)"><rect x="-11" y="-10" width="11" height="20" class="l1"/><path d="M-.2 -10 10 -5.2V5.2L-.2 10Z" class="l2"/><path d="M10 -5.2V5.2L1 0Z" class="l3"/></g><circle cx="1132.4" cy="408.6" r="5.7" class="ec"/><path d="M1126.7 408.6H1138.1M1132.4 402.9V414.3" class="ep"/><circle cx="1158" cy="409" r="10.4" fill="#fff"/><path transform="translate(1184 409) rotate(180)" class="ar" d="M-11.6 -4H1.4V-8.6L11.4 0 1.4 8.6V4H-11.6Z"/><circle cx="690.4" cy="434.6" r="5.7" class="ec"/><path d="M684.7 434.6H696.1M690.4 428.9V440.3" class="ep"/><circle cx="716.4" cy="434.6" r="5.7" class="ec"/><path d="M710.7 434.6H722.1M716.4 428.9V440.3" class="ep"/><g transform="translate(742 435) rotate(270)"><rect x="-11" y="-10" width="11" height="20" class="l1"/><path d="M-.2 -10 10 -5.2V5.2L-.2 10Z" class="l2"/><path d="M10 -5.2V5.2L1 0Z" class="l3"/></g><circle cx="768.4" cy="434.6" r="5.7" class="ec"/><path d="M762.7 434.6H774.1M768.4 428.9V440.3" class="ep"/><g transform="translate(794 435) rotate(270)"><rect x="-11" y="-10" width="11" height="20" class="l1"/><path d="M-.2 -10 10 -5.2V5.2L-.2 10Z" class="l2"/><path d="M10 -5.2V5.2L1 0Z" class="l3"/></g><circle cx="820.4" cy="434.6" r="5.7" class="ec"/><path d="M814.7 434.6H826.1M820.4 428.9V440.3" class="ep"/><path transform="translate(846 435) rotate(270)" class="ar" d="M-11.6 -4H1.4V-8.6L11.4 0 1.4 8.6V4H-11.6Z"/><circle cx="872.4" cy="434.6" r="5.7" class="ec"/><path d="M866.7 434.6H878.1M872.4 428.9V440.3" class="ep"/><circle cx="898.4" cy="434.6" r="5.7" class="ec"/><path d="M892.7 434.6H904.1M898.4 428.9V440.3" class="ep"/><path transform="translate(924 435) rotate(90)" class="ar" d="M-11.6 -4H1.4V-8.6L11.4 0 1.4 8.6V4H-11.6Z"/><circle cx="950.4" cy="434.6" r="5.7" class="ec"/><path d="M944.7 434.6H956.1M950.4 428.9V440.3" class="ep"/><g transform="translate(976 435) rotate(90)"><rect x="-11" y="-10" width="11" height="20" class="l1"/><path d="M-.2 -10 10 -5.2V5.2L-.2 10Z" class="l2"/><path d="M10 -5.2V5.2L1 0Z" class="l3"/></g><circle cx="1002.4" cy="434.6" r="5.7" class="ec"/><path d="M996.7 434.6H1008.1M1002.4 428.9V440.3" class="ep"/><circle cx="1028.4" cy="434.6" r="5.7" class="ec"/><path d="M1022.7 434.6H1034.1M1028.4 428.9V440.3" class="ep"/><path transform="translate(1054 435) rotate(270)" class="ar" d="M-11.6 -4H1.4V-8.6L11.4 0 1.4 8.6V4H-11.6Z"/><circle cx="1080.4" cy="434.6" r="5.7" class="ec"/><path d="M1074.7 434.6H1086.1M1080.4 428.9V440.3" class="ep"/><circle cx="1106.4" cy="434.6" r="5.7" class="ec"/><path d="M1100.7 434.6H1112.1M1106.4 428.9V440.3" class="ep"/><circle cx="1132" cy="435" r="10.4" fill="#fff"/><circle cx="1158.4" cy="434.6" r="5.7" class="ec"/><path d="M1152.7 434.6H1164.1M1158.4 428.9V440.3" class="ep"/><circle cx="1184.4" cy="434.6" r="5.7" class="ec"/><path d="M1178.7 434.6H1190.1M1184.4 428.9V440.3" class="ep"/><circle cx="690.4" cy="460.6" r="5.7" class="ec"/><path d="M684.7 460.6H696.1M690.4 454.9V466.3" class="ep"/><circle cx="716" cy="461" r="10.4" fill="#fff"/><circle cx="742.4" cy="460.6" r="5.7" class="ec"/><path d="M736.7 460.6H748.1M742.4 454.9V466.3" class="ep"/><g transform="translate(768 461) rotate(90)"><rect x="-11" y="-10" width="11" height="20" class="l1"/><path d="M-.2 -10 10 -5.2V5.2L-.2 10Z" class="l2"/><path d="M10 -5.2V5.2L1 0Z" class="l3"/></g><circle cx="794.4" cy="460.6" r="5.7" class="ec"/><path d="M788.7 460.6H800.1M794.4 454.9V466.3" class="ep"/><circle cx="820.4" cy="460.6" r="5.7" class="ec"/><path d="M814.7 460.6H826.1M820.4 454.9V466.3" class="ep"/><path transform="translate(846 461) rotate(270)" class="ar" d="M-11.6 -4H1.4V-8.6L11.4 0 1.4 8.6V4H-11.6Z"/><circle cx="872.4" cy="460.6" r="5.7" class="ec"/><path d="M866.7 460.6H878.1M872.4 454.9V466.3" class="ep"/><circle cx="898.4" cy="460.6" r="5.7" class="ec"/><path d="M892.7 460.6H904.1M898.4 454.9V466.3" class="ep"/><path transform="translate(924 461) rotate(90)" class="ar" d="M-11.6 -4H1.4V-8.6L11.4 0 1.4 8.6V4H-11.6Z"/><circle cx="950.4" cy="460.6" r="5.7" class="ec"/><path d="M944.7 460.6H956.1M950.4 454.9V466.3" class="ep"/><path transform="translate(976 461) rotate(90)" class="ar" d="M-11.6 -4H1.4V-8.6L11.4 0 1.4 8.6V4H-11.6Z"/><circle cx="1002.4" cy="460.6" r="5.7" class="ec"/><path d="M996.7 460.6H1008.1M1002.4 454.9V466.3" class="ep"/><circle cx="1028.4" cy="460.6" r="5.7" class="ec"/><path d="M1022.7 460.6H1034.1M1028.4 454.9V466.3" class="ep"/><path transform="translate(1054 461) rotate(270)" class="ar" d="M-11.6 -4H1.4V-8.6L11.4 0 1.4 8.6V4H-11.6Z"/><circle cx="1080.4" cy="460.6" r="5.7" class="ec"/><path d="M1074.7 460.6H1086.1M1080.4 454.9V466.3" class="ep"/><circle cx="1106" cy="461" r="10.4" fill="#fff"/><circle cx="1132.4" cy="460.6" r="5.7" class="ec"/><path d="M1126.7 460.6H1138.1M1132.4 454.9V466.3" class="ep"/><g transform="translate(1158 461)"><rect x="-11" y="-10" width="11" height="20" class="l1"/><path d="M-.2 -10 10 -5.2V5.2L-.2 10Z" class="l2"/><path d="M10 -5.2V5.2L1 0Z" class="l3"/></g><path transform="translate(1184 461)" class="ar" d="M-11.6 -4H1.4V-8.6L11.4 0 1.4 8.6V4H-11.6Z"/><circle cx="690.4" cy="486.6" r="5.7" class="ec"/><path d="M684.7 486.6H696.1M690.4 480.9V492.3" class="ep"/><circle cx="716.4" cy="486.6" r="5.7" class="ec"/><path d="M710.7 486.6H722.1M716.4 480.9V492.3" class="ep"/><circle cx="742.4" cy="486.6" r="5.7" class="ec"/><path d="M736.7 486.6H748.1M742.4 480.9V492.3" class="ep"/><path transform="translate(768 487) rotate(90)" class="ar" d="M-11.6 -4H1.4V-8.6L11.4 0 1.4 8.6V4H-11.6Z"/><circle cx="794.4" cy="486.6" r="5.7" class="ec"/><path d="M788.7 486.6H800.1M794.4 480.9V492.3" class="ep"/><circle cx="820.4" cy="486.6" r="5.7" class="ec"/><path d="M814.7 486.6H826.1M820.4 480.9V492.3" class="ep"/><path transform="translate(846 487) rotate(270)" class="ar" d="M-11.6 -4H1.4V-8.6L11.4 0 1.4 8.6V4H-11.6Z"/><circle cx="872.4" cy="486.6" r="5.7" class="ec"/><path d="M866.7 486.6H878.1M872.4 480.9V492.3" class="ep"/><circle cx="898.4" cy="486.6" r="5.7" class="ec"/><path d="M892.7 486.6H904.1M898.4 480.9V492.3" class="ep"/><circle cx="924" cy="487" r="10.4" fill="#fff"/><circle cx="950.4" cy="486.6" r="5.7" class="ec"/><path d="M944.7 486.6H956.1M950.4 480.9V492.3" class="ep"/><path transform="translate(976 487) rotate(90)" class="ar" d="M-11.6 -4H1.4V-8.6L11.4 0 1.4 8.6V4H-11.6Z"/><circle cx="1002.4" cy="486.6" r="5.7" class="ec"/><path d="M996.7 486.6H1008.1M1002.4 480.9V492.3" class="ep"/><circle cx="1028.4" cy="486.6" r="5.7" class="ec"/><path d="M1022.7 486.6H1034.1M1028.4 480.9V492.3" class="ep"/><g transform="translate(1054 487) rotate(270)"><rect x="-11" y="-10" width="11" height="20" class="l1"/><path d="M-.2 -10 10 -5.2V5.2L-.2 10Z" class="l2"/><path d="M10 -5.2V5.2L1 0Z" class="l3"/></g><circle cx="1080.4" cy="486.6" r="5.7" class="ec"/><path d="M1074.7 486.6H1086.1M1080.4 480.9V492.3" class="ep"/><circle cx="1106.4" cy="486.6" r="5.7" class="ec"/><path d="M1100.7 486.6H1112.1M1106.4 480.9V492.3" class="ep"/><circle cx="1132.4" cy="486.6" r="5.7" class="ec"/><path d="M1126.7 486.6H1138.1M1132.4 480.9V492.3" class="ep"/><circle cx="1158.4" cy="486.6" r="5.7" class="ec"/><path d="M1152.7 486.6H1164.1M1158.4 480.9V492.3" class="ep"/><circle cx="1184.4" cy="486.6" r="5.7" class="ec"/><path d="M1178.7 486.6H1190.1M1184.4 480.9V492.3" class="ep"/><g transform="translate(690 513)"><rect x="-11" y="-10" width="11" height="20" class="l1"/><path d="M-.2 -10 10 -5.2V5.2L-.2 10Z" class="l2"/><path d="M10 -5.2V5.2L1 0Z" class="l3"/></g><path transform="translate(716 513)" class="ar" d="M-11.6 -4H1.4V-8.6L11.4 0 1.4 8.6V4H-11.6Z"/><path transform="translate(742 513)" class="ar" d="M-11.6 -4H1.4V-8.6L11.4 0 1.4 8.6V4H-11.6Z"/><circle cx="768" cy="513" r="10.4" fill="#fff"/><circle cx="794.4" cy="512.6" r="5.7" class="ec"/><path d="M788.7 512.6H800.1M794.4 506.9V518.3" class="ep"/><circle cx="820.4" cy="512.6" r="5.7" class="ec"/><path d="M814.7 512.6H826.1M820.4 506.9V518.3" class="ep"/><g transform="translate(846 513) rotate(270)"><rect x="-11" y="-10" width="11" height="20" class="l1"/><path d="M-.2 -10 10 -5.2V5.2L-.2 10Z" class="l2"/><path d="M10 -5.2V5.2L1 0Z" class="l3"/></g><circle cx="872.4" cy="512.6" r="5.7" class="ec"/><path d="M866.7 512.6H878.1M872.4 506.9V518.3" class="ep"/><circle cx="898.4" cy="512.6" r="5.7" class="ec"/><path d="M892.7 512.6H904.1M898.4 506.9V518.3" class="ep"/><circle cx="924.4" cy="512.6" r="5.7" class="ec"/><path d="M918.7 512.6H930.1M924.4 506.9V518.3" class="ep"/><circle cx="950.4" cy="512.6" r="5.7" class="ec"/><path d="M944.7 512.6H956.1M950.4 506.9V518.3" class="ep"/><circle cx="976" cy="513" r="10.4" fill="#fff"/><path transform="translate(1002 513) rotate(180)" class="ar" d="M-11.6 -4H1.4V-8.6L11.4 0 1.4 8.6V4H-11.6Z"/><g transform="translate(1028 513) rotate(180)"><rect x="-11" y="-10" width="11" height="20" class="l1"/><path d="M-.2 -10 10 -5.2V5.2L-.2 10Z" class="l2"/><path d="M10 -5.2V5.2L1 0Z" class="l3"/></g><circle cx="1054.4" cy="512.6" r="5.7" class="ec"/><path d="M1048.7 512.6H1060.1M1054.4 506.9V518.3" class="ep"/><g transform="translate(1080 513)"><rect x="-11" y="-10" width="11" height="20" class="l1"/><path d="M-.2 -10 10 -5.2V5.2L-.2 10Z" class="l2"/><path d="M10 -5.2V5.2L1 0Z" class="l3"/></g><path transform="translate(1106 513)" class="ar" d="M-11.6 -4H1.4V-8.6L11.4 0 1.4 8.6V4H-11.6Z"/><path transform="translate(1132 513)" class="ar" d="M-11.6 -4H1.4V-8.6L11.4 0 1.4 8.6V4H-11.6Z"/><circle cx="1158" cy="513" r="10.4" fill="#fff"/><circle cx="1184.4" cy="512.6" r="5.7" class="ec"/><path d="M1178.7 512.6H1190.1M1184.4 506.9V518.3" class="ep"/><circle cx="690.4" cy="538.6" r="5.7" class="ec"/><path d="M684.7 538.6H696.1M690.4 532.9V544.3" class="ep"/><circle cx="716.4" cy="538.6" r="5.7" class="ec"/><path d="M710.7 538.6H722.1M716.4 532.9V544.3" class="ep"/><circle cx="742.4" cy="538.6" r="5.7" class="ec"/><path d="M736.7 538.6H748.1M742.4 532.9V544.3" class="ep"/><circle cx="768.4" cy="538.6" r="5.7" class="ec"/><path d="M762.7 538.6H774.1M768.4 532.9V544.3" class="ep"/><circle cx="794.4" cy="538.6" r="5.7" class="ec"/><path d="M788.7 538.6H800.1M794.4 532.9V544.3" class="ep"/><g transform="translate(820 539) rotate(90)"><rect x="-11" y="-10" width="11" height="20" class="l1"/><path d="M-.2 -10 10 -5.2V5.2L-.2 10Z" class="l2"/><path d="M10 -5.2V5.2L1 0Z" class="l3"/></g><circle cx="846.4" cy="538.6" r="5.7" class="ec"/><path d="M840.7 538.6H852.1M846.4 532.9V544.3" class="ep"/><circle cx="872.4" cy="538.6" r="5.7" class="ec"/><path d="M866.7 538.6H878.1M872.4 532.9V544.3" class="ep"/><circle cx="898" cy="539" r="10.4" fill="#fff"/><circle cx="924.4" cy="538.6" r="5.7" class="ec"/><path d="M918.7 538.6H930.1M924.4 532.9V544.3" class="ep"/><circle cx="950.4" cy="538.6" r="5.7" class="ec"/><path d="M944.7 538.6H956.1M950.4 532.9V544.3" class="ep"/><circle cx="976.4" cy="538.6" r="5.7" class="ec"/><path d="M970.7 538.6H982.1M976.4 532.9V544.3" class="ep"/><circle cx="1002.4" cy="538.6" r="5.7" class="ec"/><path d="M996.7 538.6H1008.1M1002.4 532.9V544.3" class="ep"/><circle cx="1028.4" cy="538.6" r="5.7" class="ec"/><path d="M1022.7 538.6H1034.1M1028.4 532.9V544.3" class="ep"/><circle cx="1054.4" cy="538.6" r="5.7" class="ec"/><path d="M1048.7 538.6H1060.1M1054.4 532.9V544.3" class="ep"/><circle cx="1080.4" cy="538.6" r="5.7" class="ec"/><path d="M1074.7 538.6H1086.1M1080.4 532.9V544.3" class="ep"/><circle cx="1106.4" cy="538.6" r="5.7" class="ec"/><path d="M1100.7 538.6H1112.1M1106.4 532.9V544.3" class="ep"/><circle cx="1132.4" cy="538.6" r="5.7" class="ec"/><path d="M1126.7 538.6H1138.1M1132.4 532.9V544.3" class="ep"/><path transform="translate(1158 539) rotate(270)" class="ar" d="M-11.6 -4H1.4V-8.6L11.4 0 1.4 8.6V4H-11.6Z"/><circle cx="1184.4" cy="538.6" r="5.7" class="ec"/><path d="M1178.7 538.6H1190.1M1184.4 532.9V544.3" class="ep"/><circle cx="690.4" cy="564.6" r="5.7" class="ec"/><path d="M684.7 564.6H696.1M690.4 558.9V570.3" class="ep"/><circle cx="716.4" cy="564.6" r="5.7" class="ec"/><path d="M710.7 564.6H722.1M716.4 558.9V570.3" class="ep"/><circle cx="742" cy="565" r="10.4" fill="#fff"/><circle cx="768.4" cy="564.6" r="5.7" class="ec"/><path d="M762.7 564.6H774.1M768.4 558.9V570.3" class="ep"/><circle cx="794.4" cy="564.6" r="5.7" class="ec"/><path d="M788.7 564.6H800.1M794.4 558.9V570.3" class="ep"/><path transform="translate(820 565) rotate(90)" class="ar" d="M-11.6 -4H1.4V-8.6L11.4 0 1.4 8.6V4H-11.6Z"/><circle cx="846.4" cy="564.6" r="5.7" class="ec"/><path d="M840.7 564.6H852.1M846.4 558.9V570.3" class="ep"/><circle cx="872" cy="565" r="10.4" fill="#fff"/><circle cx="898.4" cy="564.6" r="5.7" class="ec"/><path d="M892.7 564.6H904.1M898.4 558.9V570.3" class="ep"/><circle cx="924.4" cy="564.6" r="5.7" class="ec"/><path d="M918.7 564.6H930.1M924.4 558.9V570.3" class="ep"/><circle cx="950" cy="565" r="10.4" fill="#fff"/><circle cx="976.4" cy="564.6" r="5.7" class="ec"/><path d="M970.7 564.6H982.1M976.4 558.9V570.3" class="ep"/><circle cx="1002.4" cy="564.6" r="5.7" class="ec"/><path d="M996.7 564.6H1008.1M1002.4 558.9V570.3" class="ep"/><circle cx="1028.4" cy="564.6" r="5.7" class="ec"/><path d="M1022.7 564.6H1034.1M1028.4 558.9V570.3" class="ep"/><circle cx="1054.4" cy="564.6" r="5.7" class="ec"/><path d="M1048.7 564.6H1060.1M1054.4 558.9V570.3" class="ep"/><circle cx="1080.4" cy="564.6" r="5.7" class="ec"/><path d="M1074.7 564.6H1086.1M1080.4 558.9V570.3" class="ep"/><circle cx="1106.4" cy="564.6" r="5.7" class="ec"/><path d="M1100.7 564.6H1112.1M1106.4 558.9V570.3" class="ep"/><circle cx="1132.4" cy="564.6" r="5.7" class="ec"/><path d="M1126.7 564.6H1138.1M1132.4 558.9V570.3" class="ep"/><path transform="translate(1158 565) rotate(270)" class="ar" d="M-11.6 -4H1.4V-8.6L11.4 0 1.4 8.6V4H-11.6Z"/><circle cx="1184.4" cy="564.6" r="5.7" class="ec"/><path d="M1178.7 564.6H1190.1M1184.4 558.9V570.3" class="ep"/><path transform="translate(690 591) rotate(180)" class="ar" d="M-11.6 -4H1.4V-8.6L11.4 0 1.4 8.6V4H-11.6Z"/><g transform="translate(716 591) rotate(180)"><rect x="-11" y="-10" width="11" height="20" class="l1"/><path d="M-.2 -10 10 -5.2V5.2L-.2 10Z" class="l2"/><path d="M10 -5.2V5.2L1 0Z" class="l3"/></g><circle cx="742.4" cy="590.6" r="5.7" class="ec"/><path d="M736.7 590.6H748.1M742.4 584.9V596.3" class="ep"/><circle cx="768.4" cy="590.6" r="5.7" class="ec"/><path d="M762.7 590.6H774.1M768.4 584.9V596.3" class="ep"/><circle cx="794.4" cy="590.6" r="5.7" class="ec"/><path d="M788.7 590.6H800.1M794.4 584.9V596.3" class="ep"/><path transform="translate(820 591) rotate(90)" class="ar" d="M-11.6 -4H1.4V-8.6L11.4 0 1.4 8.6V4H-11.6Z"/><circle cx="846.4" cy="590.6" r="5.7" class="ec"/><path d="M840.7 590.6H852.1M846.4 584.9V596.3" class="ep"/><circle cx="872.4" cy="590.6" r="5.7" class="ec"/><path d="M866.7 590.6H878.1M872.4 584.9V596.3" class="ep"/><circle cx="898.4" cy="590.6" r="5.7" class="ec"/><path d="M892.7 590.6H904.1M898.4 584.9V596.3" class="ep"/><circle cx="924" cy="591" r="10.4" fill="#fff"/><circle cx="950.4" cy="590.6" r="5.7" class="ec"/><path d="M944.7 590.6H956.1M950.4 584.9V596.3" class="ep"/><g transform="translate(976 591)"><rect x="-11" y="-10" width="11" height="20" class="l1"/><path d="M-.2 -10 10 -5.2V5.2L-.2 10Z" class="l2"/><path d="M10 -5.2V5.2L1 0Z" class="l3"/></g><path transform="translate(1002 591)" class="ar" d="M-11.6 -4H1.4V-8.6L11.4 0 1.4 8.6V4H-11.6Z"/><circle cx="1028" cy="591" r="10.4" fill="#fff"/><path transform="translate(1054 591) rotate(180)" class="ar" d="M-11.6 -4H1.4V-8.6L11.4 0 1.4 8.6V4H-11.6Z"/><path transform="translate(1080 591) rotate(180)" class="ar" d="M-11.6 -4H1.4V-8.6L11.4 0 1.4 8.6V4H-11.6Z"/><g transform="translate(1106 591) rotate(180)"><rect x="-11" y="-10" width="11" height="20" class="l1"/><path d="M-.2 -10 10 -5.2V5.2L-.2 10Z" class="l2"/><path d="M10 -5.2V5.2L1 0Z" class="l3"/></g><circle cx="1132.4" cy="590.6" r="5.7" class="ec"/><path d="M1126.7 590.6H1138.1M1132.4 584.9V596.3" class="ep"/><g transform="translate(1158 591) rotate(270)"><rect x="-11" y="-10" width="11" height="20" class="l1"/><path d="M-.2 -10 10 -5.2V5.2L-.2 10Z" class="l2"/><path d="M10 -5.2V5.2L1 0Z" class="l3"/></g><circle cx="1184.4" cy="590.6" r="5.7" class="ec"/><path d="M1178.7 590.6H1190.1M1184.4 584.9V596.3" class="ep"/><circle cx="690.4" cy="616.6" r="5.7" class="ec"/><path d="M684.7 616.6H696.1M690.4 610.9V622.3" class="ep"/><circle cx="716.4" cy="616.6" r="5.7" class="ec"/><path d="M710.7 616.6H722.1M716.4 610.9V622.3" class="ep"/><g transform="translate(742 617)"><rect x="-11" y="-10" width="11" height="20" class="l1"/><path d="M-.2 -10 10 -5.2V5.2L-.2 10Z" class="l2"/><path d="M10 -5.2V5.2L1 0Z" class="l3"/></g><path transform="translate(768 617)" class="ar" d="M-11.6 -4H1.4V-8.6L11.4 0 1.4 8.6V4H-11.6Z"/><path transform="translate(794 617)" class="ar" d="M-11.6 -4H1.4V-8.6L11.4 0 1.4 8.6V4H-11.6Z"/><circle cx="820" cy="617" r="10.4" fill="#fff"/><path transform="translate(846 617) rotate(180)" class="ar" d="M-11.6 -4H1.4V-8.6L11.4 0 1.4 8.6V4H-11.6Z"/><path transform="translate(872 617) rotate(180)" class="ar" d="M-11.6 -4H1.4V-8.6L11.4 0 1.4 8.6V4H-11.6Z"/><g transform="translate(898 617) rotate(180)"><rect x="-11" y="-10" width="11" height="20" class="l1"/><path d="M-.2 -10 10 -5.2V5.2L-.2 10Z" class="l2"/><path d="M10 -5.2V5.2L1 0Z" class="l3"/></g><circle cx="924.4" cy="616.6" r="5.7" class="ec"/><path d="M918.7 616.6H930.1M924.4 610.9V622.3" class="ep"/><g transform="translate(950 617) rotate(90)"><rect x="-11" y="-10" width="11" height="20" class="l1"/><path d="M-.2 -10 10 -5.2V5.2L-.2 10Z" class="l2"/><path d="M10 -5.2V5.2L1 0Z" class="l3"/></g><circle cx="976.4" cy="616.6" r="5.7" class="ec"/><path d="M970.7 616.6H982.1M976.4 610.9V622.3" class="ep"/><circle cx="1002.4" cy="616.6" r="5.7" class="ec"/><path d="M996.7 616.6H1008.1M1002.4 610.9V622.3" class="ep"/><path transform="translate(1028 617) rotate(270)" class="ar" d="M-11.6 -4H1.4V-8.6L11.4 0 1.4 8.6V4H-11.6Z"/><circle cx="1054.4" cy="616.6" r="5.7" class="ec"/><path d="M1048.7 616.6H1060.1M1054.4 610.9V622.3" class="ep"/><circle cx="1080.4" cy="616.6" r="5.7" class="ec"/><path d="M1074.7 616.6H1086.1M1080.4 610.9V622.3" class="ep"/><circle cx="1106.4" cy="616.6" r="5.7" class="ec"/><path d="M1100.7 616.6H1112.1M1106.4 610.9V622.3" class="ep"/><circle cx="1132" cy="617" r="10.4" fill="#fff"/><circle cx="1158.4" cy="616.6" r="5.7" class="ec"/><path d="M1152.7 616.6H1164.1M1158.4 610.9V622.3" class="ep"/><circle cx="1184.4" cy="616.6" r="5.7" class="ec"/><path d="M1178.7 616.6H1190.1M1184.4 610.9V622.3" class="ep"/><circle cx="742.4" cy="642.6" r="5.7" class="ec"/><path d="M736.7 642.6H748.1M742.4 636.9V648.3" class="ep"/><circle cx="768.4" cy="642.6" r="5.7" class="ec"/><path d="M762.7 642.6H774.1M768.4 636.9V648.3" class="ep"/><circle cx="794.4" cy="642.6" r="5.7" class="ec"/><path d="M788.7 642.6H800.1M794.4 636.9V648.3" class="ep"/><circle cx="820.4" cy="642.6" r="5.7" class="ec"/><path d="M814.7 642.6H826.1M820.4 636.9V648.3" class="ep"/><circle cx="846.4" cy="642.6" r="5.7" class="ec"/><path d="M840.7 642.6H852.1M846.4 636.9V648.3" class="ep"/><circle cx="872.4" cy="642.6" r="5.7" class="ec"/><path d="M866.7 642.6H878.1M872.4 636.9V648.3" class="ep"/><circle cx="898.4" cy="642.6" r="5.7" class="ec"/><path d="M892.7 642.6H904.1M898.4 636.9V648.3" class="ep"/><circle cx="924.4" cy="642.6" r="5.7" class="ec"/><path d="M918.7 642.6H930.1M924.4 636.9V648.3" class="ep"/><path transform="translate(950 643) rotate(90)" class="ar" d="M-11.6 -4H1.4V-8.6L11.4 0 1.4 8.6V4H-11.6Z"/><circle cx="976.4" cy="642.6" r="5.7" class="ec"/><path d="M970.7 642.6H982.1M976.4 636.9V648.3" class="ep"/><circle cx="1002.4" cy="642.6" r="5.7" class="ec"/><path d="M996.7 642.6H1008.1M1002.4 636.9V648.3" class="ep"/><g transform="translate(1028 643) rotate(270)"><rect x="-11" y="-10" width="11" height="20" class="l1"/><path d="M-.2 -10 10 -5.2V5.2L-.2 10Z" class="l2"/><path d="M10 -5.2V5.2L1 0Z" class="l3"/></g><circle cx="1054.4" cy="642.6" r="5.7" class="ec"/><path d="M1048.7 642.6H1060.1M1054.4 636.9V648.3" class="ep"/><circle cx="1080.4" cy="642.6" r="5.7" class="ec"/><path d="M1074.7 642.6H1086.1M1080.4 636.9V648.3" class="ep"/><g transform="translate(1106 643) rotate(90)"><rect x="-11" y="-10" width="11" height="20" class="l1"/><path d="M-.2 -10 10 -5.2V5.2L-.2 10Z" class="l2"/><path d="M10 -5.2V5.2L1 0Z" class="l3"/></g><circle cx="1132.4" cy="642.6" r="5.7" class="ec"/><path d="M1126.7 642.6H1138.1M1132.4 636.9V648.3" class="ep"/><g transform="translate(1158 643)"><rect x="-11" y="-10" width="11" height="20" class="l1"/><path d="M-.2 -10 10 -5.2V5.2L-.2 10Z" class="l2"/><path d="M10 -5.2V5.2L1 0Z" class="l3"/></g><path transform="translate(1184 643)" class="ar" d="M-11.6 -4H1.4V-8.6L11.4 0 1.4 8.6V4H-11.6Z"/><path transform="translate(820 669)" class="ar" d="M-11.6 -4H1.4V-8.6L11.4 0 1.4 8.6V4H-11.6Z"/><path transform="translate(846 669)" class="ar" d="M-11.6 -4H1.4V-8.6L11.4 0 1.4 8.6V4H-11.6Z"/><path transform="translate(872 669)" class="ar" d="M-11.6 -4H1.4V-8.6L11.4 0 1.4 8.6V4H-11.6Z"/><circle cx="898" cy="669" r="10.4" fill="#fff"/><circle cx="924.4" cy="668.6" r="5.7" class="ec"/><path d="M918.7 668.6H930.1M924.4 662.9V674.3" class="ep"/><circle cx="950" cy="669" r="10.4" fill="#fff"/><path transform="translate(976 669) rotate(180)" class="ar" d="M-11.6 -4H1.4V-8.6L11.4 0 1.4 8.6V4H-11.6Z"/><g transform="translate(1002 669) rotate(180)"><rect x="-11" y="-10" width="11" height="20" class="l1"/><path d="M-.2 -10 10 -5.2V5.2L-.2 10Z" class="l2"/><path d="M10 -5.2V5.2L1 0Z" class="l3"/></g><circle cx="1028.4" cy="668.6" r="5.7" class="ec"/><path d="M1022.7 668.6H1034.1M1028.4 662.9V674.3" class="ep"/><circle cx="1054" cy="669" r="10.4" fill="#fff"/><circle cx="1080.4" cy="668.6" r="5.7" class="ec"/><path d="M1074.7 668.6H1086.1M1080.4 662.9V674.3" class="ep"/><path transform="translate(1106 669) rotate(90)" class="ar" d="M-11.6 -4H1.4V-8.6L11.4 0 1.4 8.6V4H-11.6Z"/><circle cx="1132.4" cy="668.6" r="5.7" class="ec"/><path d="M1126.7 668.6H1138.1M1132.4 662.9V674.3" class="ep"/><circle cx="1158.4" cy="668.6" r="5.7" class="ec"/><path d="M1152.7 668.6H1164.1M1158.4 662.9V674.3" class="ep"/><circle cx="1184.4" cy="668.6" r="5.7" class="ec"/><path d="M1178.7 668.6H1190.1M1184.4 662.9V674.3" class="ep"/></svg><div style="left:1293px;top:91px;width:627px;height:927px;background:#c2c2c2"></div><div style="left:1293px;top:91px;width:627px;height:1px;background:#707070"></div><div style="left:1292px;top:80px;width:1px;height:938px;background:#7c7c7c"></div><div class="tab" style="left:1293px;top:75px;width:98px;height:17px;"></div><svg style="left:1301.2px;top:78px" width="11" height="11" viewBox="0 0 11 11"><circle cx="5.5" cy="5.5" r="5" fill="#333"/><rect x="4.7" y="4.6" width="1.7" height="4" fill="#eee"/><rect x="4.7" y="2.2" width="1.7" height="1.6" fill="#eee"/></svg><span class="t" style="left:1316px;top:77px;font-size:11.5px;line-height:15px;color:#111;letter-spacing:0.743px;">Inspector</span><span class="t" style="left:1399px;top:77px;font-size:11.5px;line-height:15px;color:#222;letter-spacing:0.491px;">Tile Palette</span><svg style="left:1502px;top:79px" width="11" height="11" viewBox="0 0 11 11"><path d="M0 2 H5 M7.5 2 H11 M0 5.5 H2 M4.5 5.5 H11 M0 9 H6 M8.5 9 H11" stroke="#444" stroke-width="1.1"/><path d="M6.2 0.3 V3.7 M3.2 3.8 V7.2 M7.2 7.3 V10.7" stroke="#444" stroke-width="1.3"/></svg><span class="t" style="left:1516px;top:77px;font-size:11.5px;line-height:15px;color:#222;letter-spacing:0.338px;">Lighting</span><span class="t" style="left:1599px;top:77px;font-size:11.5px;line-height:15px;color:#222;letter-spacing:0.486px;">Services</span><svg style="left:1887px;top:79px" width="9" height="11" viewBox="0 0 9 11"><path d="M2 5 V3 A2.3 2.3 0 0 1 6.6 3" fill="none" stroke="#4a4a4a" stroke-width="1.2"/><rect x="0.5" y="5" width="8" height="5.5" fill="#4a4a4a"/></svg><svg style="left:1903px;top:84px" width="13" height="8" viewBox="0 0 13 8"><path d="M0 1.500 H4.400 L2.200 4.500Z" fill="#3a3a3a"/><path d="M5 1.500 H13 M5 3.500 H13 M5 5.500 H13" stroke="#3a3a3a" stroke-width="1"/></svg><div style="left:1293px;top:92px;width:627px;height:49px;background:#dedede;border-bottom:1px solid #8a8a8a;box-sizing:border-box"></div><svg style="left:1298.3px;top:99px" width="24" height="24" viewBox="0 0 24 24"><path d="M1 5.5 L11.5 1 L22 5 L11 9.5Z" fill="#8fd04c"/><path d="M1 5.5 L11 9.5 V21.5 L1.5 16.5Z" fill="#49a6dc"/><path d="M22 5 L11 9.5 V21.5 L21.5 16Z" fill="#e3592a"/><path d="M1 5.5 L11.5 1 L22 5" fill="none" stroke="#dff1c8" stroke-width="0.8" opacity=".7"/><path d="M2.5 18.5 H9.5 L6 22.5Z" fill="#222"/></svg><div style="left:1336px;top:101px;width:12px;height:12px;background:linear-gradient(#fdfdfd,#dcdcdc);border:1px solid #6d6d6d;border-radius:2px;box-sizing:border-box;background:linear-gradient(#cfdcf2,#9db4dc)"></div><svg style="left:1336px;top:99px" width="15" height="14" viewBox="0 0 15 14"><path d="M3 7.6 L6 11 L12.6 1.6" fill="none" stroke="#0b0b0b" stroke-width="2.1"/></svg><div class="inp" style="left:1354px;top:99px;width:491px;height:16px;"></div><span class="t" style="left:1357.5px;top:99.5px;font-size:11.5px;line-height:15px;color:#111;letter-spacing:0.544px;">GameObject</span><div style="left:1851px;top:101px;width:12px;height:12px;background:linear-gradient(#fdfdfd,#dcdcdc);border:1px solid #6d6d6d;border-radius:2px;box-sizing:border-box"></div><span class="t" style="left:1867.5px;top:99.5px;font-size:11.5px;line-height:15px;color:#111;letter-spacing:0.539px;">Static</span><svg style="left:1904px;top:104px" width="10" height="6"><path d="M0 0.3 H10 L5 5.7Z" fill="#333"/></svg><span class="t" style="left:1328px;top:120px;font-size:11.5px;line-height:15px;color:#111;letter-spacing:0.484px;">Tag</span><div class="pop" style="left:1354px;top:119.5px;width:263px;height:14px;"></div><span class="t" style="left:1360.5px;top:119.5px;font-size:11px;line-height:14px;color:#111;letter-spacing:-0.09px;">Untagged</span><svg style="left:1608px;top:122px" width="6" height="10"><path d="M0.5 4 H5.5 L3 0.8Z M0.5 6 H5.5 L3 9.2Z" fill="#333"/></svg><span class="t" style="left:1624.5px;top:120px;font-size:11.5px;line-height:15px;color:#111;letter-spacing:0.444px;">Layer</span><div class="pop" style="left:1663px;top:119.5px;width:251px;height:14px;"></div><span class="t" style="left:1669px;top:119.5px;font-size:11px;line-height:14px;color:#111;letter-spacing:0.163px;">Default</span><svg style="left:1904px;top:122px" width="6" height="10"><path d="M0.5 4 H5.5 L3 0.8Z M0.5 6 H5.5 L3 9.2Z" fill="#333"/></svg><svg style="left:1296.5px;top:147px" width="10" height="9"><path d="M0.5 0.8 H9.5 L5 8.2Z" fill="#6e6e6e"/></svg><svg style="left:1308px;top:143px" width="16" height="14" viewBox="0 0 16 14"><path d="M7.5 8 V0.8" stroke="#7ec63a" stroke-width="1.6"/><path d="M7.5 8 L1 12.5" stroke="#2f8fd8" stroke-width="1.6"/><path d="M7.5 8 L14.5 12" stroke="#d8332f" stroke-width="1.6"/></svg><span class="t" style="left:1342.5px;top:143.5px;font-size:11.5px;line-height:15px;color:#000;font-weight:bold;letter-spacing:1.194px;">Transform</span><svg style="left:1887px;top:143px" width="14" height="14" viewBox="0 0 14 14"><path d="M1 1.5 L3 0.5 H13 V12 L11 13.5 H1Z" fill="#2d4f86"/><rect x="2" y="1.6" width="10" height="10.6" fill="#5f86c4"/><rect x="2" y="1.6" width="2" height="10.6" fill="#9fb9e2"/><path d="M5.6 5 A1.7 1.7 0 1 1 7.6 6.6 V8" fill="none" stroke="#dfe9f8" stroke-width="1.2"/><rect x="7" y="9" width="1.3" height="1.3" fill="#dfe9f8"/></svg><svg style="left:1905px;top:144px" width="14" height="13" viewBox="0 0 14 13"><circle cx="5.5" cy="5.5" r="3" fill="none" stroke="#333" stroke-width="2"/><path d="M5.5 0.2 V2 M5.5 9 V10.8 M0.2 5.5 H2 M9 5.5 H10.8 M1.7 1.7 L3 3 M8 8 L9.3 9.3 M1.7 9.3 L3 8 M8 3 L9.3 1.7" stroke="#333" stroke-width="1.7"/><path d="M10 9 H14 L12 12Z" fill="#333"/></svg><span class="t" style="left:1308px;top:159.5px;font-size:11.5px;line-height:15px;color:#111;letter-spacing:0.26px;">Position</span><span class="t" style="left:1550px;top:159.5px;font-size:11.5px;line-height:15px;color:#111;">X</span><div class="inp" style="left:1561px;top:159px;width:107px;height:16px;"></div><span class="t" style="left:1564.5px;top:159.5px;font-size:11.5px;line-height:15px;color:#111;letter-spacing:0.244px;">37.64</span><span class="t" style="left:1673px;top:159.5px;font-size:11.5px;line-height:15px;color:#111;">Y</span><div class="inp" style="left:1684px;top:159px;width:108px;height:16px;"></div><span class="t" style="left:1687.5px;top:159.5px;font-size:11.5px;line-height:15px;color:#111;letter-spacing:0.356px;">-42.7</span><span class="t" style="left:1798px;top:159.5px;font-size:11.5px;line-height:15px;color:#111;">Z</span><div class="inp" style="left:1808px;top:159px;width:107px;height:16px;"></div><span class="t" style="left:1811.5px;top:159.5px;font-size:11.5px;line-height:15px;color:#111;letter-spacing:0.578px;">-833.0703</span><span class="t" style="left:1308px;top:177.5px;font-size:11.5px;line-height:15px;color:#111;letter-spacing:0.395px;">Rotation</span><span class="t" style="left:1550px;top:177.5px;font-size:11.5px;line-height:15px;color:#111;">X</span><div class="inp" style="left:1561px;top:177px;width:107px;height:16px;"></div><span class="t" style="left:1564.5px;top:177.5px;font-size:11.5px;line-height:15px;color:#111;">0</span><span class="t" style="left:1673px;top:177.5px;font-size:11.5px;line-height:15px;color:#111;">Y</span><div class="inp" style="left:1684px;top:177px;width:108px;height:16px;"></div><span class="t" style="left:1687.5px;top:177.5px;font-size:11.5px;line-height:15px;color:#111;">0</span><span class="t" style="left:1798px;top:177.5px;font-size:11.5px;line-height:15px;color:#111;">Z</span><div class="inp" style="left:1808px;top:177px;width:107px;height:16px;"></div><span class="t" style="left:1811.5px;top:177.5px;font-size:11.5px;line-height:15px;color:#111;">0</span><span class="t" style="left:1308px;top:195.5px;font-size:11.5px;line-height:15px;color:#111;letter-spacing:0.244px;">Scale</span><span class="t" style="left:1550px;top:195.5px;font-size:11.5px;line-height:15px;color:#111;">X</span><div class="inp" style="left:1561px;top:195px;width:107px;height:16px;"></div><span class="t" style="left:1564.5px;top:195.5px;font-size:11.5px;line-height:15px;color:#111;">1</span><span class="t" style="left:1673px;top:195.5px;font-size:11.5px;line-height:15px;color:#111;">Y</span><div class="inp" style="left:1684px;top:195px;width:108px;height:16px;"></div><span class="t" style="left:1687.5px;top:195.5px;font-size:11.5px;line-height:15px;color:#111;">1</span><span class="t" style="left:1798px;top:195.5px;font-size:11.5px;line-height:15px;color:#111;">Z</span><div class="inp" style="left:1808px;top:195px;width:107px;height:16px;"></div><span class="t" style="left:1811.5px;top:195.5px;font-size:11.5px;line-height:15px;color:#111;">1</span><div style="left:1293px;top:215px;width:627px;height:1px;background:#8a8a8a"></div><svg style="left:1296.5px;top:222px" width="10" height="9"><path d="M0.5 0.8 H9.5 L5 8.2Z" fill="#6e6e6e"/></svg><svg style="left:1309px;top:218px" width="13" height="15" viewBox="0 0 13 15"><path d="M0.5 0.5 H9 L12.5 4 V14.5 H0.5Z" fill="#f4f4f4" stroke="#8a8a8a" stroke-width="0.9"/><path d="M7.2 6.6 A2.6 2.8 0 1 0 7.2 10.6" fill="none" stroke="#1b7fd0" stroke-width="1.3"/><path d="M8 7.4 H11.4 M8 9.6 H11.4 M8.9 6.4 V10.6 M10.5 6.4 V10.6" stroke="#1b7fd0" stroke-width="0.8"/></svg><div style="left:1327px;top:219.5px;width:12px;height:12px;background:linear-gradient(#fdfdfd,#dcdcdc);border:1px solid #6d6d6d;border-radius:2px;box-sizing:border-box;background:linear-gradient(#cfdcf2,#9db4dc)"></div><svg style="left:1327px;top:217.5px" width="15" height="14" viewBox="0 0 15 14"><path d="M3 7.6 L6 11 L12.6 1.6" fill="none" stroke="#0b0b0b" stroke-width="2.1"/></svg><span class="t" style="left:1342.5px;top:218.5px;font-size:11.5px;line-height:15px;color:#000;font-weight:bold;letter-spacing:0.986px;">Simple Tiled WFC (Script)</span><svg style="left:1887px;top:218px" width="14" height="14" viewBox="0 0 14 14"><path d="M1 1.5 L3 0.5 H13 V12 L11 13.5 H1Z" fill="#2d4f86"/><rect x="2" y="1.6" width="10" height="10.6" fill="#5f86c4"/><rect x="2" y="1.6" width="2" height="10.6" fill="#9fb9e2"/><path d="M5.6 5 A1.7 1.7 0 1 1 7.6 6.6 V8" fill="none" stroke="#dfe9f8" stroke-width="1.2"/><rect x="7" y="9" width="1.3" height="1.3" fill="#dfe9f8"/></svg><svg style="left:1905px;top:219px" width="14" height="13" viewBox="0 0 14 13"><circle cx="5.5" cy="5.5" r="3" fill="none" stroke="#333" stroke-width="2"/><path d="M5.5 0.2 V2 M5.5 9 V10.8 M0.2 5.5 H2 M9 5.5 H10.8 M1.7 1.7 L3 3 M8 8 L9.3 9.3 M1.7 9.3 L3 8 M8 3 L9.3 1.7" stroke="#333" stroke-width="1.7"/><path d="M10 9 H14 L12 12Z" fill="#333"/></svg><div class="btn" style="left:1306px;top:235.5px;width:610px;height:17px;"></div><span class="t" style="left:1586px;top:237px;font-size:11.5px;line-height:14px;color:#111;letter-spacing:0.449px;width:50px;text-align:center;">generate</span><div class="btn" style="left:1306px;top:256px;width:610px;height:17px;"></div><span class="t" style="left:1586px;top:257.5px;font-size:11.5px;line-height:14px;color:#111;width:50px;text-align:center;">RUN</span><span class="t" style="left:1308px;top:277.5px;font-size:11.5px;line-height:15px;color:#7a7a7a;letter-spacing:0.599px;">Script</span><div class="inp" style="left:1549px;top:277px;width:349px;height:16px;"></div><span class="t" style="left:1565.5px;top:277.5px;font-size:11.5px;line-height:15px;color:#7a7a7a;letter-spacing:0.368px;">SimpleTiledWFC</span><svg style="left:1904px;top:280px" width="10" height="10" viewBox="0 0 10 10"><circle cx="5" cy="5" r="3.6" fill="none" stroke="#888" stroke-width="1.1"/><circle cx="5" cy="5" r="1.2" fill="#888"/></svg><svg style="left:1552px;top:279px" width="11" height="12" viewBox="0 0 11 12"><path d="M0.5 0.5 H7.5 L10.5 3.5 V11.5 H0.5Z" fill="#eee" stroke="#aaa" stroke-width="0.9"/><path d="M6.4 5.2 A2.2 2.4 0 1 0 6.4 8.8" fill="none" stroke="#5aa5e0" stroke-width="1.2"/><path d="M6.5 7 H9.5" stroke="#5aa5e0" stroke-width="1.6"/></svg><span class="t" style="left:1308px;top:295.5px;font-size:11.5px;line-height:15px;color:#111;letter-spacing:0.729px;">Xml</span><div class="inp" style="left:1549px;top:295px;width:349px;height:16px;"></div><span class="t" style="left:1565.5px;top:295.5px;font-size:11.5px;line-height:15px;color:#111;letter-spacing:0.309px;">tiles</span><svg style="left:1904px;top:298px" width="10" height="10" viewBox="0 0 10 10"><circle cx="5" cy="5" r="3.6" fill="none" stroke="#222" stroke-width="1.1"/><circle cx="5" cy="5" r="1.2" fill="#222"/></svg><svg style="left:1552px;top:297px" width="11" height="12" viewBox="0 0 11 12"><path d="M0.5 0.5 H7.5 L10.5 3.5 V11.5 H0.5Z" fill="#f2f2f2" stroke="#777" stroke-width="0.9"/><path d="M2 6 H8 M2 8 H5 M6 8 H9 M2 10 H7" stroke="#666" stroke-width="0.9"/></svg><span class="t" style="left:1308px;top:313.5px;font-size:11.5px;line-height:15px;color:#111;letter-spacing:0.352px;">Gridsize</span><div class="inp" style="left:1549px;top:313px;width:367px;height:16px;"></div><span class="t" style="left:1552.5px;top:313.5px;font-size:11.5px;line-height:15px;color:#111;">1</span><span class="t" style="left:1308px;top:331.5px;font-size:11.5px;line-height:15px;color:#111;letter-spacing:0.319px;">Width</span><div class="inp" style="left:1549px;top:331px;width:367px;height:16px;"></div><span class="t" style="left:1552.5px;top:331.5px;font-size:11.5px;line-height:15px;color:#111;">20</span><span class="t" style="left:1308px;top:349.5px;font-size:11.5px;line-height:15px;color:#111;letter-spacing:0.463px;">Depth</span><div class="inp" style="left:1549px;top:349px;width:367px;height:16px;"></div><span class="t" style="left:1552.5px;top:349.5px;font-size:11.5px;line-height:15px;color:#111;">20</span><span class="t" style="left:1308px;top:367.5px;font-size:11.5px;line-height:15px;color:#111;letter-spacing:0.285px;">Seed</span><div class="inp" style="left:1549px;top:367px;width:367px;height:16px;"></div><span class="t" style="left:1552.5px;top:367.5px;font-size:11.5px;line-height:15px;color:#111;">0</span><span class="t" style="left:1308px;top:385.5px;font-size:11.5px;line-height:15px;color:#111;letter-spacing:0.43px;">Periodic</span><div style="left:1550px;top:387.5px;width:12px;height:12px;background:linear-gradient(#fdfdfd,#dcdcdc);border:1px solid #6d6d6d;border-radius:2px;box-sizing:border-box"></div><span class="t" style="left:1308px;top:403.5px;font-size:11.5px;line-height:15px;color:#111;letter-spacing:0.669px;">Iterations</span><div class="inp" style="left:1549px;top:403px;width:367px;height:16px;"></div><span class="t" style="left:1552.5px;top:403.5px;font-size:11.5px;line-height:15px;color:#111;">10</span><span class="t" style="left:1308px;top:421.5px;font-size:11.5px;line-height:15px;color:#111;letter-spacing:0.719px;">Incremental</span><div style="left:1550px;top:423.5px;width:12px;height:12px;background:linear-gradient(#fdfdfd,#dcdcdc);border:1px solid #6d6d6d;border-radius:2px;box-sizing:border-box;background:linear-gradient(#cfdcf2,#9db4dc)"></div><svg style="left:1550px;top:421.5px" width="15" height="14" viewBox="0 0 15 14"><path d="M3 7.6 L6 11 L12.6 1.6" fill="none" stroke="#0b0b0b" stroke-width="2.1"/></svg><span class="t" style="left:1308px;top:439.5px;font-size:11.5px;line-height:15px;color:#111;letter-spacing:0.578px;">Output</span><div class="inp" style="left:1549px;top:439px;width:349px;height:16px;"></div><span class="t" style="left:1565.5px;top:439.5px;font-size:11.5px;line-height:15px;color:#111;letter-spacing:0.591px;">output-tiled</span><svg style="left:1904px;top:442px" width="10" height="10" viewBox="0 0 10 10"><circle cx="5" cy="5" r="3.6" fill="none" stroke="#222" stroke-width="1.1"/><circle cx="5" cy="5" r="1.2" fill="#222"/></svg><svg style="left:1552px;top:441px" width="12" height="12" viewBox="0 0 24 24"><path d="M1 5.5 L11.5 1 L22 5 L11 9.5Z" fill="#8fd04c"/><path d="M1 5.5 L11 9.5 V22.5 L1.5 17.5Z" fill="#49a6dc"/><path d="M22 5 L11 9.5 V22.5 L21.5 17Z" fill="#e3592a"/></svg><div style="left:1293px;top:457px;width:627px;height:1px;background:#8a8a8a"></div><div style="left:1292px;top:1018px;width:628px;height:1px;background:#8a8a8a"></div><div class="btn" style="left:1489px;top:468.5px;width:230px;height:22px;"></div><span class="t" style="left:1553.5px;top:471px;font-size:13px;line-height:16px;color:#111;letter-spacing:0.542px;">Add Component</span><div style="left:0px;top:754px;width:593px;height:264px;background:#dfdfdf"></div><div style="left:0px;top:753px;width:594px;height:1px;background:#707070"></div><div style="left:593px;top:754px;width:1px;height:264px;background:#c4c4c4"></div><div style="left:594px;top:754px;width:1px;height:265px;background:#7c7c7c"></div><div style="left:0px;top:1018px;width:595px;height:1px;background:#7c7c7c"></div><div class="tab" style="left:0px;top:737px;width:98px;height:17px;"></div><svg style="left:9px;top:740px" width="10" height="12" viewBox="0 0 10 12"><rect x="0.6" y="0.6" width="8.8" height="10.8" fill="#eee" stroke="#444" stroke-width="1.1"/><path d="M2.5 3.5 H7.5 M2.5 5.8 H7.5 M2.5 8.1 H5.5" stroke="#555" stroke-width="0.9"/></svg><span class="t" style="left:23px;top:739px;font-size:11.5px;line-height:15px;color:#111;letter-spacing:0.4px;">Console</span><svg style="left:108px;top:741px" width="11" height="11" viewBox="0 0 11 11"><path d="M1.5 0 V11 M5.5 0 V11 M9.5 0 V11" stroke="#555" stroke-width="1"/><path d="M0 7 H3 M4 3 H7 M8 5.5 H11" stroke="#333" stroke-width="1.6"/></svg><span class="t" style="left:123px;top:739px;font-size:11.5px;line-height:15px;color:#222;letter-spacing:0.571px;">Audio Mixer</span><svg style="left:208px;top:740px" width="12" height="12" viewBox="0 0 12 12"><circle cx="6" cy="6" r="5" fill="none" stroke="#333" stroke-width="1.2"/><path d="M6 2.6 V6 H8.8" fill="none" stroke="#333" stroke-width="1.2"/></svg><span class="t" style="left:223px;top:739px;font-size:11.5px;line-height:15px;color:#222;letter-spacing:0.54px;">Animation</span><svg style="left:577px;top:746.4px" width="13" height="8" viewBox="0 0 13 8"><path d="M0 1.500 H4.400 L2.200 4.500Z" fill="#3a3a3a"/><path d="M5 1.500 H13 M5 3.500 H13 M5 5.500 H13" stroke="#3a3a3a" stroke-width="1"/></svg><div class="tb" style="left:0px;top:754px;width:593px;height:18px;"></div><div class="sep" style="left:5px;top:754px;width:1px;height:17px;"></div><div class="sep" style="left:42px;top:754px;width:1px;height:17px;"></div><div class="sep" style="left:49px;top:754px;width:1px;height:17px;"></div><div class="sep" style="left:102px;top:754px;width:1px;height:17px;"></div><div class="sep" style="left:179px;top:754px;width:1px;height:17px;"></div><div class="sep" style="left:248px;top:754px;width:1px;height:17px;"></div><div class="sep" style="left:296px;top:754px;width:1px;height:17px;"></div><div class="sep" style="left:489px;top:754px;width:1px;height:17px;"></div><div class="sep" style="left:521px;top:754px;width:1px;height:17px;"></div><div class="sep" style="left:554px;top:754px;width:1px;height:17px;"></div><div class="sep" style="left:587px;top:754px;width:1px;height:17px;"></div><span class="t" style="left:10.5px;top:755.8px;font-size:11px;line-height:15px;color:#111;letter-spacing:-0.059px;">Clear</span><span class="t" style="left:53px;top:755.8px;font-size:11px;line-height:15px;color:#111;letter-spacing:0.023px;">Collapse</span><div style="left:103px;top:754px;width:76px;height:17px;background:#fff"></div><div style="left:490px;top:754px;width:97px;height:17px;background:linear-gradient(#fff,#e8e8e8)"></div><span class="t" style="left:107.5px;top:755.8px;font-size:11px;line-height:15px;color:#111;letter-spacing:-0.004px;">Clear on Play</span><span class="t" style="left:184px;top:755.8px;font-size:11px;line-height:15px;color:#111;letter-spacing:-0.064px;">Error Pause</span><span class="t" style="left:254px;top:755.8px;font-size:11px;line-height:15px;color:#111;letter-spacing:0.208px;">Editor</span><svg style="left:288px;top:758px" width="6" height="4"><path d="M0.2 0.4 H5.4 L2.8 3.4Z" fill="#444"/></svg><svg style="left:493px;top:755.5px" width="15" height="15" viewBox="0 0 15 15"><path d="M7.5 1 A6 5.6 0 1 1 4 11.2 L1.5 13 L2.6 10 A6 5.6 0 0 1 7.5 1Z" fill="#f4f4f4" stroke="#777" stroke-width="1"/><rect x="6.8" y="3.4" width="1.5" height="4.6" fill="#555"/><rect x="6.8" y="9" width="1.5" height="1.5" fill="#555"/></svg><span class="t" style="left:510px;top:755.8px;font-size:11px;line-height:15px;color:#111;">0</span><svg style="left:526px;top:755.5px" width="15" height="14" viewBox="0 0 15 14"><path d="M7.5 1 L14 13 H1Z" fill="#e8e8e8" stroke="#888" stroke-width="1"/><path d="M7.5 1.8 L10.5 7.5 L7.5 12.4 L4 12.4 L2 12.4Z" fill="#cfcfcf"/></svg><span class="t" style="left:543px;top:755.8px;font-size:11px;line-height:15px;color:#111;">0</span><svg style="left:559.5px;top:755.5px" width="15" height="15" viewBox="0 0 15 15"><path d="M4.6 0.5 H10.4 L14.5 4.600 V10.400 L10.400 14.500 H4.600 L0.500 10.400 V4.600Z" fill="#5c5c5c"/><rect x="6.700" y="3" width="1.700" height="6" fill="#fff"/><rect x="6.700" y="10.200" width="1.700" height="1.800" fill="#fff"/></svg><span class="t" style="left:576px;top:755.8px;font-size:11px;line-height:15px;color:#111;">0</span><div style="left:0px;top:945px;width:594px;height:1px;background:#7c7c7c"></div><div style="left:598px;top:754px;width:691px;height:264px;background:#c2c2c2"></div><div style="left:597px;top:753px;width:692px;height:1px;background:#707070"></div><div style="left:597px;top:1018px;width:692px;height:1px;background:#8a8a8a"></div><div style="left:597px;top:754px;width:1px;height:264px;background:#8a8a8a"></div><div style="left:1289px;top:754px;width:1px;height:264px;background:#8a8a8a"></div><svg style="left:605px;top:741px" width="11" height="10" viewBox="0 0 11 10"><path d="M0.6 9.200 V1.600 L1.600 0.600 H4.400 L5.400 1.800 H10.400 V9.200Z" fill="#8e8e8e" stroke="#3c3c3c" stroke-width="1.100"/><path d="M0.600 3.300 H10.400" stroke="#3c3c3c" stroke-width="0.800"/></svg><span class="t" style="left:620px;top:739px;font-size:11.5px;line-height:15px;color:#222;letter-spacing:0.6px;">Project</span><div class="tab" style="left:696px;top:737px;width:99px;height:17px;"></div><svg style="left:705px;top:741px" width="11" height="10" viewBox="0 0 11 10"><path d="M0.6 9.200 V1.600 L1.600 0.600 H4.400 L5.400 1.800 H10.400 V9.200Z" fill="#8e8e8e" stroke="#3c3c3c" stroke-width="1.100"/><path d="M0.600 3.300 H10.400" stroke="#3c3c3c" stroke-width="0.800"/></svg><span class="t" style="left:720px;top:739px;font-size:11.5px;line-height:15px;color:#111;letter-spacing:0.6px;">Project</span><svg style="left:1258px;top:742.3px" width="9" height="11" viewBox="0 0 9 11"><path d="M2 5 V3 A2.3 2.3 0 0 1 6.6 3" fill="none" stroke="#4a4a4a" stroke-width="1.2"/><rect x="0.5" y="5" width="8" height="5.5" fill="#4a4a4a"/></svg><svg style="left:1273px;top:746.4px" width="13" height="8" viewBox="0 0 13 8"><path d="M0 1.500 H4.400 L2.200 4.500Z" fill="#3a3a3a"/><path d="M5 1.500 H13 M5 3.500 H13 M5 5.500 H13" stroke="#3a3a3a" stroke-width="1"/></svg><div class="tb" style="left:598px;top:754px;width:691px;height:18px;"></div><div class="sep" style="left:603px;top:754px;width:1px;height:17px;"></div><div class="sep" style="left:655px;top:754px;width:1px;height:17px;"></div><div class="sep" style="left:1217px;top:754px;width:1px;height:17px;"></div><div class="sep" style="left:1239px;top:754px;width:1px;height:17px;"></div><div class="sep" style="left:1261px;top:754px;width:1px;height:17px;"></div><div class="sep" style="left:1283px;top:754px;width:1px;height:17px;"></div><span class="t" style="left:609.5px;top:756px;font-size:11px;line-height:15px;color:#111;letter-spacing:-0.172px;">Create</span><svg style="left:647px;top:759px" width="6" height="4"><path d="M0.2 0.4 H5.4 L2.8 3.4Z" fill="#444"/></svg><div style="left:913px;top:756px;width:300px;height:14px;background:#dcdcdc;border:1px solid #888;border-top-color:#6a6a6a;border-radius:8px;box-sizing:border-box;box-shadow:inset 0 1px 1px rgba(0,0,0,.18)"></div><svg style="left:919px;top:759px" width="12" height="9" viewBox="0 0 12 9"><circle cx="3.4" cy="3.4" r="2.6" fill="none" stroke="#666" stroke-width="1.1"/><path d="M5.2 5.4 L7.4 8.2" stroke="#666" stroke-width="1.2"/></svg><svg style="left:1222px;top:757px" width="13" height="12" viewBox="0 0 13 12"><circle cx="7.5" cy="3.4" r="2.8" fill="#444"/><path d="M0.5 9 L4 3.5 L7.5 9Z" fill="#444"/><rect x="7.6" y="6.6" width="4" height="4" fill="#444"/></svg><svg style="left:1244px;top:757px" width="13" height="12" viewBox="0 0 13 12"><path d="M1 1 H5.5 L12 7.5 L8 11.5 L1 5Z" fill="#444"/><circle cx="3.4" cy="3.4" r="1" fill="#ddd"/></svg><svg style="left:1266px;top:756px" width="13" height="12" viewBox="0 0 13 12"><path d="M6.5 0.5 L8.2 4.4 L12.4 4.7 L9.2 7.4 L10.2 11.5 L6.5 9.3 L2.8 11.5 L3.8 7.4 L0.6 4.7 L4.8 4.4Z" fill="#9a9a9a"/></svg><div style="left:598px;top:772px;width:189px;height:246px;overflow:hidden"><svg style="left:43px;top:-4px" width="15" height="13" viewBox="0 0 15 13"><path d="M0.5 12.5 V1.8 L1.4 0.6 H5.8 L6.8 1.8 H14.5 V12.5Z" fill="#7e7e7e" stroke="#4e4e4e" stroke-width="0.9"/><path d="M0.9 3.4 H14.1 V12.1 H0.9Z" fill="#b4b4b4"/><path d="M0.9 3.4 H14.1 V5 H0.9Z" fill="#d9d9d9"/><path d="M0.9 5 H14.1 V7.4 H0.9Z" fill="#c4c4c4"/><path d="M0.9 9.6 H14.1 V12.1 H0.9Z" fill="#9e9e9e"/></svg><svg style="left:32px;top:6.5px" width="9" height="10"><path d="M0.8 0.5 V9.5 L8.2 5Z" fill="#666"/></svg><svg style="left:43px;top:4.5px" width="15" height="13" viewBox="0 0 15 13"><path d="M0.5 12.5 V1.8 L1.4 0.6 H5.8 L6.8 1.8 H14.5 V12.5Z" fill="#7e7e7e" stroke="#4e4e4e" stroke-width="0.9"/><path d="M0.9 3.4 H14.1 V12.1 H0.9Z" fill="#b4b4b4"/><path d="M0.9 3.4 H14.1 V5 H0.9Z" fill="#d9d9d9"/><path d="M0.9 5 H14.1 V7.4 H0.9Z" fill="#c4c4c4"/><path d="M0.9 9.6 H14.1 V12.1 H0.9Z" fill="#9e9e9e"/></svg><span class="t" style="left:61px;top:3.8px;font-size:11.5px;line-height:15px;color:#111;letter-spacing:0.254px;">Plugins</span><svg style="left:32px;top:22.5px" width="9" height="10"><path d="M0.8 0.5 V9.5 L8.2 5Z" fill="#666"/></svg><svg style="left:43px;top:20.5px" width="15" height="13" viewBox="0 0 15 13"><path d="M0.5 12.5 V1.8 L1.4 0.6 H5.8 L6.8 1.8 H14.5 V12.5Z" fill="#7e7e7e" stroke="#4e4e4e" stroke-width="0.9"/><path d="M0.9 3.4 H14.1 V12.1 H0.9Z" fill="#b4b4b4"/><path d="M0.9 3.4 H14.1 V5 H0.9Z" fill="#d9d9d9"/><path d="M0.9 5 H14.1 V7.4 H0.9Z" fill="#c4c4c4"/><path d="M0.9 9.6 H14.1 V12.1 H0.9Z" fill="#9e9e9e"/></svg><span class="t" style="left:61px;top:19.8px;font-size:11.5px;line-height:15px;color:#111;letter-spacing:0.364px;">PostProcessing</span><svg style="left:32px;top:38.5px" width="9" height="10"><path d="M0.8 0.5 V9.5 L8.2 5Z" fill="#666"/></svg><svg style="left:43px;top:36.5px" width="15" height="13" viewBox="0 0 15 13"><path d="M0.5 12.5 V1.8 L1.4 0.6 H5.8 L6.8 1.8 H14.5 V12.5Z" fill="#7e7e7e" stroke="#4e4e4e" stroke-width="0.9"/><path d="M0.9 3.4 H14.1 V12.1 H0.9Z" fill="#b4b4b4"/><path d="M0.9 3.4 H14.1 V5 H0.9Z" fill="#d9d9d9"/><path d="M0.9 5 H14.1 V7.4 H0.9Z" fill="#c4c4c4"/><path d="M0.9 9.6 H14.1 V12.1 H0.9Z" fill="#9e9e9e"/></svg><span class="t" style="left:61px;top:35.8px;font-size:11.5px;line-height:15px;color:#111;letter-spacing:0.676px;">Trello Bug Tracker - Pr</span><svg style="left:32px;top:54.5px" width="9" height="10"><path d="M0.8 0.5 V9.5 L8.2 5Z" fill="#666"/></svg><svg style="left:43px;top:52.5px" width="15" height="13" viewBox="0 0 15 13"><path d="M0.5 12.5 V1.8 L1.4 0.6 H5.8 L6.8 1.8 H14.5 V12.5Z" fill="#7e7e7e" stroke="#4e4e4e" stroke-width="0.9"/><path d="M0.9 3.4 H14.1 V12.1 H0.9Z" fill="#b4b4b4"/><path d="M0.9 3.4 H14.1 V5 H0.9Z" fill="#d9d9d9"/><path d="M0.9 5 H14.1 V7.4 H0.9Z" fill="#c4c4c4"/><path d="M0.9 9.6 H14.1 V12.1 H0.9Z" fill="#9e9e9e"/></svg><span class="t" style="left:61px;top:51.8px;font-size:11.5px;line-height:15px;color:#111;letter-spacing:0.501px;">UniClipboard</span><svg style="left:31px;top:71.5px" width="10" height="9"><path d="M0.5 0.8 H9.5 L5 8.2Z" fill="#666"/></svg><svg style="left:43px;top:68.5px" width="15" height="13" viewBox="0 0 15 13"><path d="M0.5 12.5 V1.8 L1.4 0.6 H5.8 L6.8 1.8 H14.5 V12.5Z" fill="#7e7e7e" stroke="#4e4e4e" stroke-width="0.9"/><path d="M0.9 3.4 H14.1 V12.1 H0.9Z" fill="#b4b4b4"/><path d="M0.9 3.4 H14.1 V5 H0.9Z" fill="#d9d9d9"/><path d="M0.9 5 H14.1 V7.4 H0.9Z" fill="#c4c4c4"/><path d="M0.9 9.6 H14.1 V12.1 H0.9Z" fill="#9e9e9e"/></svg><span class="t" style="left:61px;top:67.8px;font-size:11.5px;line-height:15px;color:#111;letter-spacing:0.564px;">unity-wave-function-collapse</span><svg style="left:57px;top:84.5px" width="15" height="13" viewBox="0 0 15 13"><path d="M0.5 12.5 V1.8 L1.4 0.6 H5.8 L6.8 1.8 H14.5 V12.5Z" fill="#7e7e7e" stroke="#4e4e4e" stroke-width="0.9"/><path d="M0.9 3.4 H14.1 V12.1 H0.9Z" fill="#b4b4b4"/><path d="M0.9 3.4 H14.1 V5 H0.9Z" fill="#d9d9d9"/><path d="M0.9 5 H14.1 V7.4 H0.9Z" fill="#c4c4c4"/><path d="M0.9 9.6 H14.1 V12.1 H0.9Z" fill="#9e9e9e"/></svg><span class="t" style="left:75px;top:83.8px;font-size:11.5px;line-height:15px;color:#111;letter-spacing:0.477px;">impl</span><svg style="left:32px;top:102.5px" width="9" height="10"><path d="M0.8 0.5 V9.5 L8.2 5Z" fill="#666"/></svg><svg style="left:43px;top:100.5px" width="15" height="13" viewBox="0 0 15 13"><path d="M0.5 12.5 V1.8 L1.4 0.6 H5.8 L6.8 1.8 H14.5 V12.5Z" fill="#7e7e7e" stroke="#4e4e4e" stroke-width="0.9"/><path d="M0.9 3.4 H14.1 V12.1 H0.9Z" fill="#b4b4b4"/><path d="M0.9 3.4 H14.1 V5 H0.9Z" fill="#d9d9d9"/><path d="M0.9 5 H14.1 V7.4 H0.9Z" fill="#c4c4c4"/><path d="M0.9 9.6 H14.1 V12.1 H0.9Z" fill="#9e9e9e"/></svg><span class="t" style="left:61px;top:99.8px;font-size:11.5px;line-height:15px;color:#111;letter-spacing:0.554px;">VolumetricLines</span><svg style="left:29px;top:116.5px" width="15" height="13" viewBox="0 0 15 13"><path d="M0.5 12.5 V1.8 L1.4 0.6 H5.8 L6.8 1.8 H14.5 V12.5Z" fill="#7e7e7e" stroke="#4e4e4e" stroke-width="0.9"/><path d="M0.9 3.4 H14.1 V12.1 H0.9Z" fill="#b4b4b4"/><path d="M0.9 3.4 H14.1 V5 H0.9Z" fill="#d9d9d9"/><path d="M0.9 5 H14.1 V7.4 H0.9Z" fill="#c4c4c4"/><path d="M0.9 9.6 H14.1 V12.1 H0.9Z" fill="#9e9e9e"/></svg><span class="t" style="left:47px;top:115.8px;font-size:11.5px;line-height:15px;color:#111;letter-spacing:0.242px;">Palettes</span><svg style="left:18px;top:134.5px" width="9" height="10"><path d="M0.8 0.5 V9.5 L8.2 5Z" fill="#666"/></svg><svg style="left:29px;top:132.5px" width="15" height="13" viewBox="0 0 15 13"><path d="M0.5 12.5 V1.8 L1.4 0.6 H5.8 L6.8 1.8 H14.5 V12.5Z" fill="#7e7e7e" stroke="#4e4e4e" stroke-width="0.9"/><path d="M0.9 3.4 H14.1 V12.1 H0.9Z" fill="#b4b4b4"/><path d="M0.9 3.4 H14.1 V5 H0.9Z" fill="#d9d9d9"/><path d="M0.9 5 H14.1 V7.4 H0.9Z" fill="#c4c4c4"/><path d="M0.9 9.6 H14.1 V12.1 H0.9Z" fill="#9e9e9e"/></svg><span class="t" style="left:47px;top:131.8px;font-size:11.5px;line-height:15px;color:#111;letter-spacing:0.337px;">Prefabs</span><div style="left:0px;top:146px;width:189px;height:16px;background:#8f8f8f"></div><svg style="left:29px;top:148.5px" width="15" height="13" viewBox="0 0 15 13"><path d="M0.5 12.5 V1.8 L1.4 0.6 H5.8 L6.8 1.8 H14.5 V12.5Z" fill="#7e7e7e" stroke="#4e4e4e" stroke-width="0.9"/><path d="M0.9 3.4 H14.1 V12.1 H0.9Z" fill="#b4b4b4"/><path d="M0.9 3.4 H14.1 V5 H0.9Z" fill="#d9d9d9"/><path d="M0.9 5 H14.1 V7.4 H0.9Z" fill="#c4c4c4"/><path d="M0.9 9.6 H14.1 V12.1 H0.9Z" fill="#9e9e9e"/></svg><span class="t" style="left:47px;top:147.8px;font-size:11.5px;line-height:15px;color:#fff;letter-spacing:0.337px;">Resources</span><svg style="left:18px;top:166.5px" width="9" height="10"><path d="M0.8 0.5 V9.5 L8.2 5Z" fill="#666"/></svg><svg style="left:29px;top:164.5px" width="15" height="13" viewBox="0 0 15 13"><path d="M0.5 12.5 V1.8 L1.4 0.6 H5.8 L6.8 1.8 H14.5 V12.5Z" fill="#7e7e7e" stroke="#4e4e4e" stroke-width="0.9"/><path d="M0.9 3.4 H14.1 V12.1 H0.9Z" fill="#b4b4b4"/><path d="M0.9 3.4 H14.1 V5 H0.9Z" fill="#d9d9d9"/><path d="M0.9 5 H14.1 V7.4 H0.9Z" fill="#c4c4c4"/><path d="M0.9 9.6 H14.1 V12.1 H0.9Z" fill="#9e9e9e"/></svg><span class="t" style="left:47px;top:163.8px;font-size:11.5px;line-height:15px;color:#111;letter-spacing:0.273px;">Scenes</span><svg style="left:18px;top:182.5px" width="9" height="10"><path d="M0.8 0.5 V9.5 L8.2 5Z" fill="#666"/></svg><svg style="left:29px;top:180.5px" width="15" height="13" viewBox="0 0 15 13"><path d="M0.5 12.5 V1.8 L1.4 0.6 H5.8 L6.8 1.8 H14.5 V12.5Z" fill="#7e7e7e" stroke="#4e4e4e" stroke-width="0.9"/><path d="M0.9 3.4 H14.1 V12.1 H0.9Z" fill="#b4b4b4"/><path d="M0.9 3.4 H14.1 V5 H0.9Z" fill="#d9d9d9"/><path d="M0.9 5 H14.1 V7.4 H0.9Z" fill="#c4c4c4"/><path d="M0.9 9.6 H14.1 V12.1 H0.9Z" fill="#9e9e9e"/></svg><span class="t" style="left:47px;top:179.8px;font-size:11.5px;line-height:15px;color:#111;letter-spacing:0.406px;">Scripts</span><svg style="left:29px;top:196.5px" width="15" height="13" viewBox="0 0 15 13"><path d="M0.5 12.5 V1.8 L1.4 0.6 H5.8 L6.8 1.8 H14.5 V12.5Z" fill="#7e7e7e" stroke="#4e4e4e" stroke-width="0.9"/><path d="M0.9 3.4 H14.1 V12.1 H0.9Z" fill="#b4b4b4"/><path d="M0.9 3.4 H14.1 V5 H0.9Z" fill="#d9d9d9"/><path d="M0.9 5 H14.1 V7.4 H0.9Z" fill="#c4c4c4"/><path d="M0.9 9.6 H14.1 V12.1 H0.9Z" fill="#9e9e9e"/></svg><span class="t" style="left:47px;top:195.8px;font-size:11.5px;line-height:15px;color:#111;letter-spacing:0.292px;">Sfx</span><svg style="left:18px;top:214.5px" width="9" height="10"><path d="M0.8 0.5 V9.5 L8.2 5Z" fill="#666"/></svg><svg style="left:29px;top:212.5px" width="15" height="13" viewBox="0 0 15 13"><path d="M0.5 12.5 V1.8 L1.4 0.6 H5.8 L6.8 1.8 H14.5 V12.5Z" fill="#7e7e7e" stroke="#4e4e4e" stroke-width="0.9"/><path d="M0.9 3.4 H14.1 V12.1 H0.9Z" fill="#b4b4b4"/><path d="M0.9 3.4 H14.1 V5 H0.9Z" fill="#d9d9d9"/><path d="M0.9 5 H14.1 V7.4 H0.9Z" fill="#c4c4c4"/><path d="M0.9 9.6 H14.1 V12.1 H0.9Z" fill="#9e9e9e"/></svg><span class="t" style="left:47px;top:211.8px;font-size:11.5px;line-height:15px;color:#111;letter-spacing:0.386px;">Sprites</span><svg style="left:18px;top:230.5px" width="9" height="10"><path d="M0.8 0.5 V9.5 L8.2 5Z" fill="#666"/></svg><svg style="left:29px;top:228.5px" width="15" height="13" viewBox="0 0 15 13"><path d="M0.5 12.5 V1.8 L1.4 0.6 H5.8 L6.8 1.8 H14.5 V12.5Z" fill="#7e7e7e" stroke="#4e4e4e" stroke-width="0.9"/><path d="M0.9 3.4 H14.1 V12.1 H0.9Z" fill="#b4b4b4"/><path d="M0.9 3.4 H14.1 V5 H0.9Z" fill="#d9d9d9"/><path d="M0.9 5 H14.1 V7.4 H0.9Z" fill="#c4c4c4"/><path d="M0.9 9.6 H14.1 V12.1 H0.9Z" fill="#9e9e9e"/></svg><span class="t" style="left:47px;top:227.8px;font-size:11.5px;line-height:15px;color:#111;letter-spacing:0.228px;">Tiles</span></div><div style="left:787px;top:772px;width:15px;height:246px;background:#c8c8c8"></div><div style="left:787px;top:788px;width:15px;height:214px;background:linear-gradient(90deg,#bdbdbd,#dcdcdc 40%,#e2e2e2);border-radius:7px;border:1px solid #a8a8a8;box-sizing:border-box"></div><div style="left:788px;top:902px;width:13px;height:98px;background:linear-gradient(90deg,#7f92b2,#9fb0cb 50%,#8295b5);border:1px solid #5e6e8a;border-radius:6px;box-sizing:border-box"></div><svg style="left:790px;top:776px" width="9" height="8"><path d="M0.5 7 H8.5 L4.5 0.8Z" fill="#444"/></svg><svg style="left:790px;top:1005px" width="9" height="8"><path d="M0.5 1 H8.5 L4.5 7.2Z" fill="#444"/></svg><div style="left:802px;top:772px;width:1px;height:246px;background:#9a9a9a"></div><div style="left:803px;top:772px;width:486px;height:18px;background:#dedede;border-bottom:1px solid #9a9a9a;box-sizing:border-box"></div><span class="t" style="left:808.5px;top:773.8px;font-size:11.5px;line-height:15px;color:#111;letter-spacing:0.164px;">Assets</span><svg style="left:850px;top:777px" width="7" height="8"><path d="M0.5 0.5 V7.5 L6 4Z" fill="#777"/></svg><span class="t" style="left:864px;top:773.8px;font-size:11.5px;line-height:15px;color:#000;font-weight:bold;letter-spacing:0.743px;">Resources</span><svg style="left:819px;top:792.5px" width="14" height="14" viewBox="0 0 14 14"><path d="M0.6 3.4 L7 0.6 L13.4 3.2 L7 6.2Z" fill="#b9e3fb"/><path d="M0.6 3.4 L7 6.2 V13.4 L0.8 10.4Z" fill="#5bb2e6"/><path d="M13.4 3.2 L7 6.2 V13.4 L13.2 10.2Z" fill="#2f86c8"/></svg><span class="t" style="left:836.5px;top:791.8px;font-size:11.5px;line-height:15px;color:#111;letter-spacing:0.358px;">CornerNE_L</span><svg style="left:819px;top:808.5px" width="14" height="14" viewBox="0 0 14 14"><path d="M0.6 3.4 L7 0.6 L13.4 3.2 L7 6.2Z" fill="#b9e3fb"/><path d="M0.6 3.4 L7 6.2 V13.4 L0.8 10.4Z" fill="#5bb2e6"/><path d="M13.4 3.2 L7 6.2 V13.4 L13.2 10.2Z" fill="#2f86c8"/></svg><span class="t" style="left:836.5px;top:807.8px;font-size:11.5px;line-height:15px;color:#111;letter-spacing:0.456px;">EmtpyX</span><svg style="left:819px;top:824.5px" width="14" height="14" viewBox="0 0 14 14"><path d="M0.6 3.4 L7 0.6 L13.4 3.2 L7 6.2Z" fill="#b9e3fb"/><path d="M0.6 3.4 L7 6.2 V13.4 L0.8 10.4Z" fill="#5bb2e6"/><path d="M13.4 3.2 L7 6.2 V13.4 L13.2 10.2Z" fill="#2f86c8"/></svg><span class="t" style="left:836.5px;top:823.8px;font-size:11.5px;line-height:15px;color:#111;letter-spacing:0.355px;">LaserWhiteN_T</span><svg style="left:819px;top:840.5px" width="14" height="14" viewBox="0 0 14 14"><path d="M0.6 3.4 L7 0.6 L13.4 3.2 L7 6.2Z" fill="#b9e3fb"/><path d="M0.6 3.4 L7 6.2 V13.4 L0.8 10.4Z" fill="#5bb2e6"/><path d="M13.4 3.2 L7 6.2 V13.4 L13.2 10.2Z" fill="#2f86c8"/></svg><span class="t" style="left:836.5px;top:839.8px;font-size:11.5px;line-height:15px;color:#111;letter-spacing:0.302px;">LineWhiteN_T</span><svg style="left:819px;top:856.5px" width="14" height="14" viewBox="0 0 14 14"><path d="M0.6 3.4 L7 0.6 L13.4 3.2 L7 6.2Z" fill="#b9e3fb"/><path d="M0.6 3.4 L7 6.2 V13.4 L0.8 10.4Z" fill="#5bb2e6"/><path d="M13.4 3.2 L7 6.2 V13.4 L13.2 10.2Z" fill="#2f86c8"/></svg><span class="t" style="left:836.5px;top:855.8px;font-size:11.5px;line-height:15px;color:#111;letter-spacing:0.62px;">TargetWhite_X</span><div style="left:803px;top:1001px;width:486px;height:17px;background:#dedede;border-top:1px solid #9a9a9a;box-sizing:border-box"></div><div style="left:1222px;top:1008px;width:51px;height:3px;background:#8a8a8a;border-radius:2px"></div><div style="left:1217px;top:1005px;width:10px;height:10px;background:linear-gradient(#fff,#d8d8d8);border:1px solid #666;border-radius:5px;box-sizing:border-box"></div><div style="left:0px;top:1040px;width:1920px;height:40px;background:linear-gradient(90deg,#0e0f12 0%,#121316 25%,#19191b 50%,#18191b 75%,#141517 100%)"></div><div style="left:454px;top:1040px;width:48px;height:40px;background:#444546"></div><div style="left:115px;top:1078px;width:40px;height:2px;background:#76b9ed"></div><div style="left:213px;top:1078px;width:40px;height:2px;background:#76b9ed"></div><div style="left:454px;top:1078px;width:48px;height:2px;background:#76b9ed"></div><div style="left:703px;top:1078px;width:40px;height:2px;background:#76b9ed"></div><div style="left:1046px;top:1078px;width:40px;height:2px;background:#76b9ed"></div><svg style="left:0;top:1030px" width="1920" height="50" viewBox="0 1030 1920 50"><defs><radialGradient id="lg1" cx="30" cy="1060" r="28" gradientUnits="userSpaceOnUse"><stop offset="0.55" stop-color="#f9b04e"/><stop offset="1" stop-color="#ff6f16"/></radialGradient><radialGradient id="lg2" cx="30" cy="1060.5" r="18.5" gradientUnits="userSpaceOnUse"><stop offset="0" stop-color="#fff4f2"/><stop offset="0.12" stop-color="#fbd5cf"/><stop offset="0.32" stop-color="#f0805e"/><stop offset="0.8" stop-color="#e4553a"/><stop offset="0.93" stop-color="#dc4433"/><stop offset="1" stop-color="#d23229"/></radialGradient></defs><g><path d="M30 1031.500 C33 1034 39 1038 39 1042.500 L35 1049 H25 L21 1042.500 C21 1038 27 1034 30 1031.500Z" fill="url(#lg1)" transform="rotate(45 30 1060)"/><path d="M30 1031.500 C33 1034 39 1038 39 1042.500 L35 1049 H25 L21 1042.500 C21 1038 27 1034 30 1031.500Z" fill="url(#lg1)" transform="rotate(135 30 1060)"/><path d="M30 1031.500 C33 1034 39 1038 39 1042.500 L35 1049 H25 L21 1042.500 C21 1038 27 1034 30 1031.500Z" fill="url(#lg1)" transform="rotate(225 30 1060)"/><path d="M30 1031.500 C33 1034 39 1038 39 1042.500 L35 1049 H25 L21 1042.500 C21 1038 27 1034 30 1031.500Z" fill="url(#lg1)" transform="rotate(315 30 1060)"/><path d="M30 1033 C33 1036 37.5 1039.5 37 1043.5 L34.5 1048 H25.5 L23 1043.5 C22.5 1039.5 27 1036 30 1033Z" fill="url(#lg1)" transform="rotate(0 30 1060)"/><path d="M30 1033 C33 1036 37.5 1039.5 37 1043.5 L34.5 1048 H25.5 L23 1043.5 C22.5 1039.5 27 1036 30 1033Z" fill="url(#lg1)" transform="rotate(90 30 1060)"/><path d="M30 1033 C33 1036 37.5 1039.5 37 1043.5 L34.5 1048 H25.5 L23 1043.5 C22.5 1039.5 27 1036 30 1033Z" fill="url(#lg1)" transform="rotate(180 30 1060)"/><path d="M30 1033 C33 1036 37.5 1039.5 37 1043.5 L34.5 1048 H25.5 L23 1043.5 C22.5 1039.5 27 1036 30 1033Z" fill="url(#lg1)" transform="rotate(270 30 1060)"/><circle cx="30" cy="1060.2" r="18.3" fill="url(#lg2)"/><circle cx="30" cy="1060.2" r="17.8" fill="none" stroke="#d6382c" stroke-width="1"/></g><g fill="none" stroke="#fff" stroke-width="1.3" shape-rendering="crispEdges"><rect x="76.500" y="1056.500" width="10.500" height="7"/><path d="M76.500 1052 V1053.500 H87 V1052 M76.500 1067.500 V1066 H87 V1067.500"/><path d="M90.500 1052 V1055.500 M90.500 1060.500 V1067.500"/><rect x="89.500" y="1056.500" width="2" height="2.500" fill="#fff" stroke="none"/></g><g><path d="M124 1050.500 H132.500 L134 1052 H145.500 V1068.500 H124Z" fill="#f4c84a"/><path d="M124 1052.500 H145.500 V1068.500 H124Z" fill="#fce391"/><path d="M125 1051.200 H131 V1052 H125Z" fill="#fff4c8"/><path d="M128.200 1060.800 H141.800 V1068.800 H128.200Z" fill="#3aa9e8"/><path d="M131.800 1064 H138.200 V1068.800 H131.800Z" fill="#fce391"/></g><g fill="#0a7bd2"><path d="M190.200 1047.800 L196 1050 V1069.600 L190.200 1071.800Z"/><path d="M172 1066.900 L190.200 1067.600 V1071.800Z"/></g><path d="M174 1054.300 L186.500 1063.300 M174 1062.500 L190.500 1050.200" stroke="#0a7bd2" stroke-width="2.500" fill="none"/><g><circle cx="233" cy="1059.800" r="11" fill="#de4a3c"/><path d="M233 1059.800 L223.470 1065.300 A11 11 0 0 0 233 1070.800 L238.500 1061.300Z" fill="#1da261"/><path d="M223.470 1065.300 A11 11 0 0 1 223.470 1054.300 L233 1059.800Z" fill="#1da261"/><path d="M233 1070.800 A11 11 0 0 0 242.530 1054.300 H233 L238.500 1061.300Z" fill="#ffce43"/><path d="M223.470 1054.300 A11 11 0 0 1 242.530 1054.300 H233Z" fill="#de4a3c"/><circle cx="233" cy="1059.800" r="5.200" fill="#f4f4f4"/><circle cx="233" cy="1059.800" r="4.100" fill="#4a8af4"/></g><g><path d="M277.500 1053.500 V1052 A5 4.300 0 0 1 287.500 1052 V1053.500" fill="none" stroke="#fff" stroke-width="1.300"/><path d="M270 1053 H293.300 V1069.500 A1.500 1.500 0 0 1 291.800 1071 H271.500 A1.500 1.500 0 0 1 270 1069.500Z" fill="#fff"/><rect x="275.800" y="1057.200" width="5.200" height="5.200" fill="#f25022"/><rect x="281.800" y="1057.200" width="5.200" height="5.200" fill="#7fba00"/><rect x="275.800" y="1063" width="5.200" height="5.200" fill="#00a4ef"/><rect x="281.800" y="1063" width="5.200" height="5.200" fill="#ffb900"/></g><g><rect x="319.200" y="1048.100" width="24" height="23.700" fill="#8f4f97"/><path d="M322.500 1066.500 C325 1062 326.500 1056 328.500 1053.500 C329.500 1056 328.500 1062 329.500 1064.500 C331.500 1061 333 1056 335 1053.500 C336 1057 335 1062 336.500 1066" fill="none" stroke="#fff" stroke-width="2.400" stroke-linecap="round" stroke-linejoin="round"/><text x="335.800" y="1064" font-family="Liberation Sans" font-size="12.500" font-weight="bold" fill="#f58a1f">2</text></g><g><rect x="369.900" y="1049.900" width="19.800" height="18.500" fill="#001c28" stroke="#12c2f2" stroke-width="1.500"/><text x="373.300" y="1064.200" font-family="Liberation Sans" font-size="13" fill="#12c2f2">Ps</text></g><g fill="#8c62ce"><path d="M435.500 1048 L440.700 1050 V1069.500 L435.500 1071.500Z"/><path d="M417 1066.600 L435.500 1068 V1071.500Z"/><path fill-rule="evenodd" d="M418 1054.800 L420.800 1053.600 L426 1057.600 L435.500 1050.600 V1066 L426 1060.600 L420.800 1064.600 L418 1063.400Z M428.600 1059.100 L433 1062.300 V1055.900Z M420.200 1056.800 V1061.400 L423.200 1059.100Z"/></g><g><path d="M467.300 1059.300 L485.600 1048.600 L488 1059.300 L485.600 1070Z" fill="#fff" stroke="#141414" stroke-width="1.700" stroke-linejoin="round"/><path d="M480 1059.300 H468 M480 1059.300 L485.400 1049 M480 1059.300 L485.400 1069.600" stroke="#141414" stroke-width="1.600" fill="none"/></g><g><circle cx="527" cy="1059.800" r="10.500" fill="#141a30"/><path d="M519.500 1053.500 A9.500 9.500 0 0 0 521.500 1067.500 M534.500 1053.500 A9.500 9.500 0 0 1 532.500 1067.500" fill="none" stroke="#179f8f" stroke-width="2"/><path d="M527 1051.200 C522.500 1051.200 521.800 1056 522.600 1060.500 L523.600 1066.500 H525 V1063.500 H525.800 V1069 H528.200 V1063.500 H529 V1066.500 H530.400 L531.400 1060.500 C532.200 1056 531.500 1051.200 527 1051.200Z" fill="#179f8f"/><circle cx="525" cy="1060.500" r="0.800" fill="#141a30"/><circle cx="529" cy="1060.500" r="0.800" fill="#141a30"/></g><g><circle cx="576" cy="1060" r="10.5" fill="#1f1f1f"/><circle cx="576" cy="1060" r="10.5" fill="none" stroke="#050505" stroke-width="1.5"/><text x="571" y="1065" font-family="Liberation Sans" font-size="13" font-weight="bold" fill="#fff">K</text></g><g><rect x="614" y="1048" width="21" height="15" rx="1.5" fill="#3f7fd6" stroke="#cfd8e8" stroke-width="1.2"/><rect x="615.5" y="1053" width="14" height="6" fill="#7cc0f8"/><path d="M617 1055 H628 M617 1057 H628" stroke="#fff" stroke-width="0.8" stroke-dasharray="1.4 0.8"/><rect x="622" y="1063" width="6" height="4" fill="#b8c0cc"/><ellipse cx="625" cy="1069" rx="6.5" ry="2" fill="#d8dde6"/></g><g><rect x="663" y="1054" width="12" height="14" fill="#dfe6f4" stroke="#8a96b0" stroke-width="0.8"/><rect x="671" y="1057" width="13" height="13" fill="#e9eef8" stroke="#8a96b0" stroke-width="0.8"/><text x="664" y="1065" font-family="Liberation Sans" font-size="9.5" font-weight="bold" fill="#1b2f6e">A</text><text x="673.5" y="1068.5" font-family="Liberation Sans" font-size="9.5" font-weight="bold" fill="#1b2f6e">B</text><path d="M666 1053 C668 1048 674 1048 677 1050 V1047.5 L684 1052 L677 1056 V1053.5 C673 1052 669 1052 666 1053Z" fill="#8cc63f" stroke="#5a9a1e" stroke-width="0.6"/></g><g><path d="M711 1064.500 L720.500 1057.200 H713.500 C712 1057.200 712 1054.600 713.500 1054.600 H723.500 L722.500 1052.200 C722 1050.500 724 1049.500 725 1050.600 L732.500 1056.500 C735.500 1059.500 735 1064.500 731.500 1067 C727.500 1069.800 721.500 1069.200 719 1066 C718.200 1065 718 1064 718.200 1063 L713 1067 C711.500 1068 710 1065.800 711 1064.500Z" fill="#f5821f"/><circle cx="726.200" cy="1060.600" r="5.200" fill="#fff"/><circle cx="726.200" cy="1060.600" r="3" fill="#0d4f9e"/></g><g><circle cx="771.800" cy="1059.800" r="10.800" fill="#2b3034"/><circle cx="771.800" cy="1059.800" r="10.300" fill="none" stroke="#5a6166" stroke-width="1"/><path d="M767 1054 C770 1052 776 1053 777.500 1056 C778 1060 774 1066 769 1070.500 C766.500 1068 765.500 1059 767 1054Z" fill="#f58a1c"/><path d="M767.300 1055 C769.500 1054 772 1054.500 772.500 1056.500 C772.500 1060 770.500 1065 768.200 1068.500 C766.500 1065 766.300 1059 767.300 1055Z" fill="#ffd84a"/><path d="M768 1054.500 C768.500 1051.500 772 1050 775 1051.500 C777.500 1052 779.500 1054 779.500 1056.500 C777 1055.500 775.500 1056.500 774 1055.500 C772 1056.500 769.500 1056 768 1054.500Z" fill="#86b83a"/><path d="M773.500 1052 L776 1048.500" stroke="#5d8a28" stroke-width="1"/></g><g><rect x="809" y="1048" width="24" height="24" fill="#f3c02c"/><path d="M821 1050.5 L823.5 1057.5 L830.5 1060 L823.5 1062.5 L821 1069.5 L818.5 1062.5 L811.5 1060 L818.5 1057.5Z" fill="#222"/><circle cx="821" cy="1060" r="6" fill="#050505"/><circle cx="821" cy="1060" r="7.2" fill="none" stroke="#222" stroke-width="0.8"/></g><g><path d="M861 1053.5 L864 1052 H877 L880.5 1054.5 L881.5 1066 L878 1068 H862.5 L859 1065.5Z" fill="#c9d3e6"/><path d="M864 1052 H877 L878.5 1063.5 H862.5Z" fill="#eef2f8"/><text x="863.5" y="1062.5" font-family="Liberation Sans" font-size="9.5" font-weight="bold" fill="#2d52c4">&#955;</text><text x="872" y="1062.5" font-family="Liberation Sans" font-size="9.5" font-weight="bold" fill="#2f9a46">?</text><rect x="869" y="1053" width="2" height="2" fill="#c33"/></g><g><rect x="907" y="1051" width="24" height="14" fill="#fff"/><rect x="917" y="1065" width="4" height="2.5" fill="#ccc"/><rect x="913" y="1067.5" width="12" height="1.5" fill="#bbb"/><path d="M916.5 1056 V1060 A2.5 2.5 0 0 0 921.5 1060 V1056" fill="none" stroke="#999" stroke-width="0.9"/></g><g><path d="M966 1048 L976 1052.5 V1064 L966 1069 L956 1064 V1052.5Z" fill="#1d3b72"/><path d="M966 1048 L976 1052.5 L966 1057 L956 1052.5Z" fill="#e8eef8"/><path d="M966 1050.5 L971.5 1052.8 L966 1055.2 L960.5 1052.8Z" fill="#1d3b72"/><path d="M956 1052.5 L966 1057 V1069 L956 1064Z" fill="#dfe7f4"/><path d="M958.5 1056.5 L963.5 1058.8 V1065 L958.5 1062.5Z" fill="#1d3b72"/><path d="M976 1052.5 L966 1057 V1069 L976 1064Z" fill="#2a4f95"/><ellipse cx="966" cy="1070" rx="7" ry="1.6" fill="#7f8aa3" opacity=".7"/></g><g><path d="M1008 1059.5 C1008.5 1053.5 1012.5 1050 1018 1050 C1024 1050 1027.5 1054 1027.5 1060 V1062.5 H1014.5 C1015 1065.5 1018 1067 1021.5 1067 C1023.5 1067 1025.5 1066.5 1027 1065.5 V1069 C1025 1070 1022.5 1070.5 1020 1070.5 C1013.5 1070.5 1009.5 1066.5 1009.5 1061 C1009.500 1058 1011 1055.500 1013.500 1054 C1011 1055 1009 1057 1008 1059.5Z M1014.6 1058.5 H1021.8 C1021.8 1056 1020.4 1054.4 1018.2 1054.4 C1016.2 1054.4 1014.9 1056 1014.6 1058.5Z" fill="#1b7fd6" fill-rule="evenodd"/></g><g><rect x="1054.5" y="1050.5" width="22" height="18" fill="#050505" stroke="#9a9a9a" stroke-width="1"/><rect x="1055" y="1051" width="21" height="2.6" fill="#cfcfcf"/><path d="M1057 1056.5 H1059 M1060 1056.5 H1063 M1064 1057.8 H1073" stroke="#ddd" stroke-width="1"/></g><g fill="none" stroke="#fff" stroke-width="1.1"><circle cx="1616" cy="1054.5" r="2.6"/><path d="M1611.500 1062 A4.5 4.500 0 0 1 1620.500 1062"/><circle cx="1609.5" cy="1059" r="2.3"/><path d="M1605.500 1066.500 A4 4 0 0 1 1613.500 1066.500"/></g><path d="M1643.5 1063 L1649 1057.5 L1654.500 1063" fill="none" stroke="#fff" stroke-width="1.2"/><g fill="none" stroke="#fff" stroke-width="1.1"><rect x="1669.500" y="1057.500" width="11" height="7"/><path d="M1680.500 1059.500 V1062.500" stroke-width="1.6"/><path d="M1666 1054.500 V1057 M1668.500 1054.500 V1057 M1665 1057 H1669.500 V1059.500 A2 2 0 0 1 1665.500 1060 Z M1667.200 1061.500 V1064.500"/><rect x="1671" y="1059" width="8" height="4" fill="#fff" stroke="none"/></g><g fill="none" stroke="#fff" stroke-width="1.1"><path d="M1690 1058 H1692.500 L1696 1054.500 V1066 L1692.500 1062.500 H1690Z"/><path d="M1698 1057.500 A3.500 3.500 0 0 1 1698 1063 M1700.200 1055.500 A6 6 0 0 1 1700.200 1065 M1702.500 1053.800 A8.500 8.500 0 0 1 1702.500 1066.800"/></g><g fill="none" stroke="#fff" stroke-width="1.1"><path d="M1718 1054.500 H1728.500 V1062.500 H1718"/><path d="M1723 1062.500 V1066 M1719.500 1066.500 H1726.500"/><rect x="1713.500" y="1055.500" width="4" height="5"/><path d="M1715.500 1060.500 V1066.500 H1719.500"/></g><g fill="none" stroke="#fff" stroke-width="1.1"><rect x="1737.500" y="1053.500" width="22" height="12" rx="1"/><path d="M1740 1056.500 H1757 M1740 1059.200 H1757" stroke-dasharray="1.400 1.200"/><path d="M1742.500 1062.500 H1754.500"/></g><path d="M1880 1052.500 H1894.500 V1063.500 H1889.500 L1887.200 1066 L1885 1063.500 H1880Z" fill="none" stroke="#fff" stroke-width="1.2"/><path d="M1915.5 1040 V1080" stroke="#6a6a6a" stroke-width="1"/></svg><span class="t" style="left:1771.5px;top:1045px;font-size:12px;line-height:15px;color:#fff;letter-spacing:-1.172px;">ENG</span><span class="t" style="left:1776px;top:1062px;font-size:12px;line-height:15px;color:#fff;letter-spacing:-1.922px;">SG</span><span class="t" style="left:1821px;top:1044.2px;font-size:12px;line-height:15px;color:#fff;letter-spacing:-0.806px;">16:52</span><span class="t" style="left:1807px;top:1062px;font-size:12px;line-height:15px;color:#fff;letter-spacing:-0.606px;">05.10.2018</span></body></html>
